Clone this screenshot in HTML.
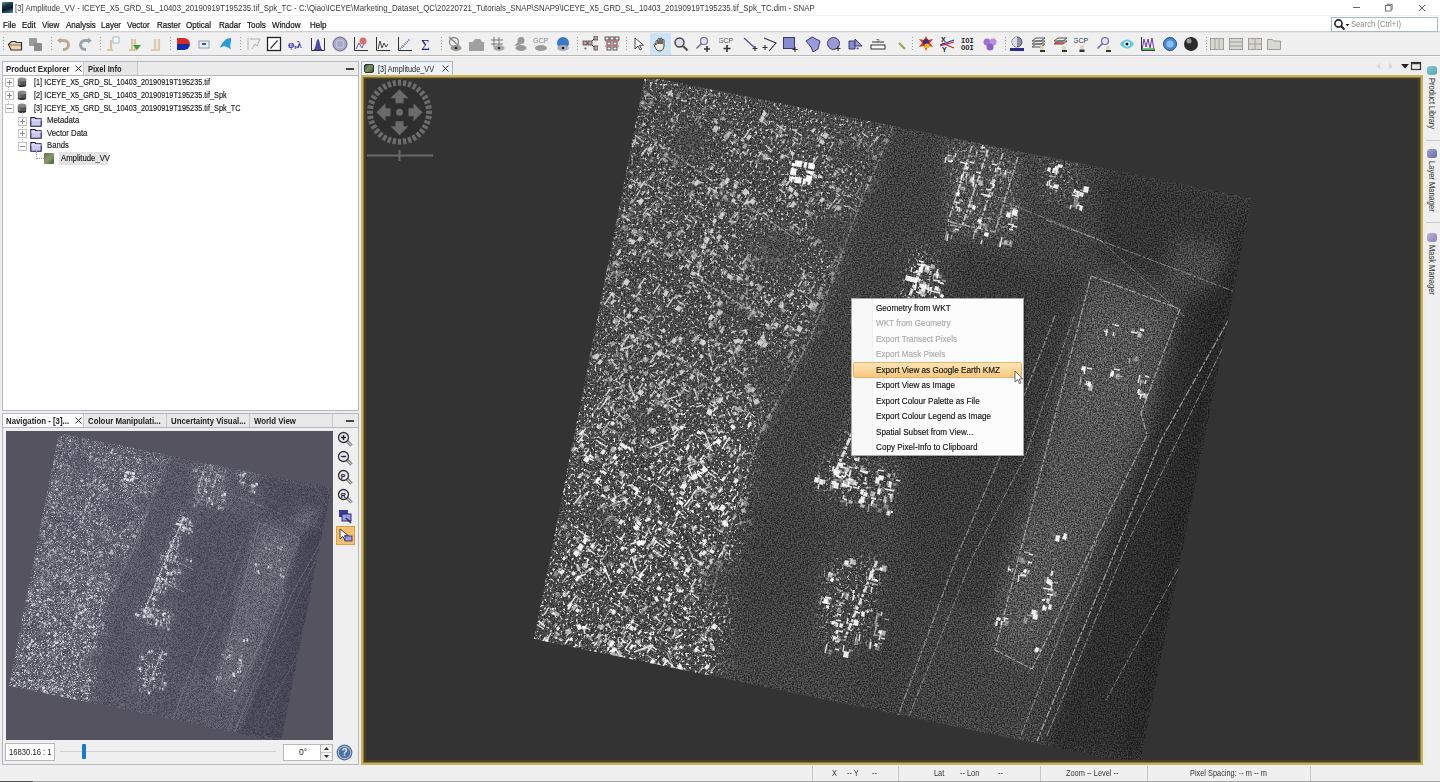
<!DOCTYPE html>
<html><head><meta charset="utf-8">
<style>
*{margin:0;padding:0;box-sizing:border-box}
html,body{width:1440px;height:782px;overflow:hidden;background:#eeeeee;font-family:"Liberation Sans",sans-serif;color:#1e1e1e}
.a{position:absolute}
.t{position:absolute;white-space:nowrap;line-height:1;transform-origin:0 0}
.sx{transform:scaleX(.89)}
.menu .t{font-size:9px;top:20.5px;color:#111;-webkit-text-stroke:.2px #111}
.sep{position:absolute;top:37px;width:1px;height:15px;background:repeating-linear-gradient(#9a9a9a 0 1px,transparent 1px 3px)}
.ic{position:absolute;top:36px;width:16px;height:16px}
.tab{position:absolute;font-weight:bold;font-size:8.4px;color:#222}
.tree .t{font-size:8.5px;color:#262626}
.st{position:absolute;font-size:8.2px;top:770px;color:#333;white-space:nowrap;line-height:1}
.ss{position:absolute;top:766px;width:1px;height:15px;background:#c6c6c6}
</style></head><body>
<div class="a" style="left:0;top:0;width:1440px;height:16px;background:#fff;border-bottom:1px solid #f0f0f0"></div>
<div class="a" style="left:2px;top:2px;width:11px;height:11px;background:linear-gradient(160deg,#6f98a8 0,#1b3b4b 30%,#0a1a24 60%,#4c90b8 100%)"></div>
<div class="t" style="left:15px;top:4px;font-size:8.8px;color:#3a3a3a;transform:scaleX(.889)">[3] Amplitude_VV - ICEYE_X5_GRD_SL_10403_20190919T195235.tif_Spk_TC - C:\Qiao\ICEYE\Marketing_Dataset_QC\20220721_Tutorials_SNAP\SNAP9\ICEYE_X5_GRD_SL_10403_20190919T195235.tif_Spk_TC.dim - SNAP</div>
<svg class="a" style="left:1345px;top:0" width="95" height="16"><path d="M8 7.5h7" stroke="#666" stroke-width="1"/><rect x="40.5" y="5.5" width="5.5" height="5.5" fill="none" stroke="#777" stroke-width="1"/><path d="M42 5.5v-1.2h5.2v5.2h-1.2" fill="none" stroke="#777" stroke-width="1"/><path d="M74 5l6 6M80 5l-6 6" stroke="#555" stroke-width="1"/></svg>
<div class="a" style="left:0;top:16px;width:1440px;height:16px;background:#fff;border-bottom:1px solid #cfcfcf"></div>
<div class="menu">
<span class="t sx" style="left:3px">File</span>
<span class="t sx" style="left:22px">Edit</span>
<span class="t sx" style="left:42px">View</span>
<span class="t sx" style="left:66px">Analysis</span>
<span class="t sx" style="left:101px">Layer</span>
<span class="t sx" style="left:127px">Vector</span>
<span class="t sx" style="left:157px">Raster</span>
<span class="t sx" style="left:186px">Optical</span>
<span class="t sx" style="left:219px">Radar</span>
<span class="t sx" style="left:247px">Tools</span>
<span class="t sx" style="left:272px">Window</span>
<span class="t sx" style="left:310px">Help</span>
</div>
<div class="a" style="left:1331px;top:17px;width:107px;height:15px;background:#fff;border:1px solid #a9b7c9"></div>
<svg class="a" style="left:1333px;top:18px" width="18" height="13"><circle cx="5.5" cy="5.5" r="3.6" fill="none" stroke="#222" stroke-width="1.6"/><path d="M8 8l3.5 3.5" stroke="#222" stroke-width="2"/><path d="M12.5 6h4l-2 2.2z" fill="#222"/></svg>
<div class="t" style="left:1351px;top:19.5px;font-size:8.5px;color:#8a8a8a;transform:scaleX(.9)">Search (Ctrl+I)</div>
<div class="a" style="left:0;top:32px;width:1440px;height:24px;background:#f0f0f0;border-top:1px solid #e6e6e6;border-bottom:1px solid #b8b8b8"></div>
<div class="a" style="left:0;top:56px;width:1440px;height:1px;background:#f8f8f8"></div>
<svg class="a" style="left:7px;top:36px" width="16" height="16"><path d="M1.5 8.5l3-3h4l1 1h5v7.5h-10.5z" fill="#e8d6c0" stroke="#3a3020" stroke-width="1.2"/><path d="M2 9h12" stroke="#8a7050"/></svg>
<svg class="a" style="left:28px;top:36px" width="16" height="16"><rect x="1" y="2" width="8" height="8" rx="1" fill="#9a9a9a"/><rect x="6" y="7" width="8" height="8" rx="1" fill="#8c8c8c"/></svg>
<svg class="a" style="left:56px;top:36px" width="16" height="16"><path d="M3 4.5h5a4.5 4.5 0 0 1 0 9h-1" fill="none" stroke="#b8ac90" stroke-width="3"/><path d="M1 4.5l4-3v6z" fill="#b8ac90"/></svg>
<svg class="a" style="left:77px;top:36px" width="16" height="16"><path d="M13 4.5h-5a4.5 4.5 0 0 0 0 9h1" fill="none" stroke="#98a4b0" stroke-width="3"/><path d="M15 4.5l-4-3v6z" fill="#98a4b0"/></svg>
<svg class="a" style="left:104px;top:36px" width="16" height="16"><path d="M3 14h6M7 14V4" stroke="#d9c3a0" stroke-width="2.2"/><rect x="9" y="1" width="6" height="6" fill="#fff" stroke="#a8b8d8"/></svg>
<svg class="a" style="left:126px;top:36px" width="16" height="16"><path d="M3 14h8M6 14V3M9 14V3" stroke="#d9c3a0" stroke-width="2.2"/><path d="M7 9l4 5 4-5z" fill="#3aa03a"/></svg>
<svg class="a" style="left:148px;top:36px" width="16" height="16"><path d="M3 14h9M7 14V3M11 14V3" stroke="#dccaa8" stroke-width="2.2"/></svg>
<svg class="a" style="left:175px;top:36px" width="16" height="16"><path d="M2 2h7a6 6 0 0 1 6 6H2z" fill="#d42a2a"/><path d="M2 8h13a6 6 0 0 1-6 6H2z" fill="#1a2ab0"/></svg>
<svg class="a" style="left:196px;top:36px" width="16" height="16"><rect x="3" y="5" width="10" height="7" fill="#e8eef6" stroke="#8aa0b8"/><path d="M6 8h4" stroke="#3a5a9a" stroke-width="2"/></svg>
<svg class="a" style="left:218px;top:36px" width="16" height="16"><path d="M2 12c2-6 6-10 11-10 1 4-2 6 0 11-4-1-6-5-11-1z" fill="#2a9ad8"/></svg>
<svg class="a" style="left:246px;top:36px" width="16" height="16"><path d="M2 2v12M4 3h10l-3 7-2-2-3 5" fill="none" stroke="#b0b0b0" stroke-width="1"/></svg>
<svg class="a" style="left:266px;top:36px" width="16" height="16"><rect x="1.5" y="1.5" width="13" height="13" fill="#fff" stroke="#222" stroke-width="1.3"/><path d="M4 12l7-8 1 1-7 8z" fill="#444"/></svg>
<svg class="a" style="left:288px;top:36px" width="16" height="16"><text x="0" y="12" font-size="10" font-weight="bold" fill="#2a2ab0" font-family="Liberation Serif">φ,λ</text></svg>
<svg class="a" style="left:310px;top:36px" width="16" height="16"><path d="M1.5 2v12.5h13V2" fill="none" stroke="#333"/><path d="M3 14c3 0 3-11 5-11s2 11 5 11z" fill="#4a4aa8"/></svg>
<svg class="a" style="left:332px;top:36px" width="16" height="16"><circle cx="8" cy="8" r="7" fill="#a8a8c8" stroke="#6a6a88"/><circle cx="8" cy="8" r="4" fill="none" stroke="#ccd"/></svg>
<svg class="a" style="left:353px;top:36px" width="16" height="16"><path d="M1.5 1v13.5H15" fill="none" stroke="#333"/><path d="M3 13l3-6 3 5 3-7" fill="none" stroke="#6a5aa0"/><circle cx="10" cy="5" r="3.5" fill="#d87070"/></svg>
<svg class="a" style="left:375px;top:36px" width="16" height="16"><path d="M1.5 1v13.5H15" fill="none" stroke="#333"/><path d="M3 13l2-8 2 7 2-5 2 4 2-3" fill="none" stroke="#444"/></svg>
<svg class="a" style="left:397px;top:36px" width="16" height="16"><path d="M1.5 1v13.5H15" fill="none" stroke="#333"/><path d="M3 13l10-10" stroke="#7a6ab8" stroke-width="2" stroke-dasharray="1 1"/></svg>
<svg class="a" style="left:419px;top:36px" width="16" height="16"><text x="2" y="14" font-size="15" fill="#1a1a8a" font-family="Liberation Serif">Σ</text></svg>
<svg class="a" style="left:447px;top:36px" width="16" height="16"><circle cx="7" cy="6" r="4.5" fill="none" stroke="#888" stroke-width="1.3"/><path d="M2 1l11 10" stroke="#888" stroke-width="1.3"/><ellipse cx="9" cy="12" rx="5.5" ry="3" fill="#999"/><circle cx="9" cy="12" r="1.3" fill="#333"/></svg>
<svg class="a" style="left:468px;top:36px" width="16" height="16"><path d="M1 6h4l2-3h5l2 3h2v9H1z" fill="#a0a0a0"/></svg>
<svg class="a" style="left:490px;top:36px" width="16" height="16"><path d="M4 1v10M9 1v10M1 4h12M1 8h12" stroke="#777"/><ellipse cx="9" cy="12" rx="5.5" ry="3" fill="#aaa"/><circle cx="9" cy="12" r="1.3" fill="#333"/></svg>
<svg class="a" style="left:512px;top:36px" width="16" height="16"><circle cx="9" cy="4.5" r="3.5" fill="#999"/><path d="M2 10l4-4 3 3z" fill="#999"/><ellipse cx="9" cy="12" rx="5.5" ry="3" fill="#999"/></svg>
<svg class="a" style="left:533px;top:36px" width="16" height="16"><text x="0" y="7" font-size="7" fill="#888" font-family="Liberation Sans">GCP</text><ellipse cx="8" cy="12" rx="6" ry="3" fill="#9a9a9a"/></svg>
<svg class="a" style="left:555px;top:36px" width="16" height="16"><circle cx="8" cy="7" r="6" fill="#3a78c8"/><ellipse cx="8" cy="12" rx="6" ry="3" fill="#a8b0c0"/><circle cx="8" cy="12" r="1.3" fill="#222"/></svg>
<svg class="a" style="left:582px;top:36px" width="16" height="16"><path d="M3 7h5l5-5M8 7l5 5" stroke="#444" fill="none"/><rect x="1" y="5" width="4" height="4" fill="#c8a0a0" stroke="#333" stroke-width=".7"/><rect x="6" y="5" width="4" height="4" fill="#c8a0a0" stroke="#333" stroke-width=".7"/><rect x="12" y="0" width="4" height="4" fill="#c8a0a0" stroke="#333" stroke-width=".7"/><rect x="12" y="10" width="4" height="4" fill="#c8a0a0" stroke="#333" stroke-width=".7"/><text x="2" y="16" font-size="7" fill="#444">*</text></svg>
<svg class="a" style="left:604px;top:36px" width="16" height="16"><g fill="none" stroke="#333" stroke-width=".8"><rect x="1" y="1" width="4" height="3"/><rect x="6" y="1" width="4" height="3"/><rect x="11" y="1" width="4" height="3"/><rect x="3" y="6" width="4" height="3"/><rect x="9" y="6" width="4" height="3"/><rect x="3" y="11" width="4" height="3"/><rect x="9" y="11" width="4" height="3"/></g><path d="M1 5h14M1 10h14" stroke="#c83030" stroke-width=".8"/></svg>
<svg class="a" style="left:630px;top:36px" width="16" height="16"><path d="M5 2v11l3-3 2 4 1.5-.8-2-4h4z" fill="#fff" stroke="#333" stroke-width=".9"/></svg>
<div class="a" style="left:650px;top:33px;width:21px;height:22px;background:#cde4f7"></div>
<svg class="a" style="left:652px;top:36px" width="16" height="16"><path d="M4 9V5.5a1 1 0 0 1 2 0V8V3.5a1 1 0 0 1 2 0V8V3a1 1 0 0 1 2 0v5V4.5a1 1 0 0 1 2 0V10c0 3-2 5-4.5 5S4 13 3 11L2 8.5a1 1 0 0 1 2 .5z" fill="#f2e8d8" stroke="#333" stroke-width=".9"/></svg>
<svg class="a" style="left:673px;top:36px" width="16" height="16"><circle cx="6.5" cy="6.5" r="4.5" fill="#dcdcf0" stroke="#444" stroke-width="1.4"/><path d="M10 10l4.5 4.5" stroke="#555" stroke-width="2.4"/></svg>
<svg class="a" style="left:695px;top:36px" width="16" height="16"><circle cx="9" cy="5" r="3.5" fill="#e8e4f8" stroke="#6a6ab0" stroke-width="1.2"/><path d="M6.5 7.5L1.5 12.5" stroke="#6a6ab0" stroke-width="1.6"/><path d="M12 10v6M9 13h6" stroke="#333" stroke-width="1.5"/></svg>
<svg class="a" style="left:719px;top:36px" width="16" height="16"><text x="-1" y="7" font-size="7" fill="#555" font-family="Liberation Sans">GCP</text><path d="M8 9v7M4.5 12.5h7" stroke="#333" stroke-width="1.6"/></svg>
<svg class="a" style="left:743px;top:36px" width="16" height="16"><path d="M1 2l11 10" stroke="#4a4aa0" stroke-width="1.2"/><path d="M12 10v5M9.5 12.5h5" stroke="#333" stroke-width="1.1"/></svg>
<svg class="a" style="left:761px;top:36px" width="16" height="16"><path d="M3 2l12 5-7 8" fill="none" stroke="#333" stroke-width="1.1"/><path d="M4 9v5M1.5 11.5h5" stroke="#333" stroke-width="1.1"/></svg>
<svg class="a" style="left:782px;top:36px" width="16" height="16"><rect x="1.5" y="1.5" width="11" height="11" fill="#8a8ad0" stroke="#3a3a7a"/><path d="M13 11v5M10.5 13.5h5" stroke="#333" stroke-width="1.1"/></svg>
<svg class="a" style="left:805px;top:36px" width="16" height="16"><path d="M1 5l6-4 8 4-2 8-5 3-2-5z" fill="#9a9ad8" stroke="#3a3a7a"/></svg>
<svg class="a" style="left:826px;top:36px" width="16" height="16"><circle cx="7.5" cy="7.5" r="6" fill="#9a9ad8" stroke="#3a3a7a"/><path d="M12 10v5M9.5 12.5h5" stroke="#333" stroke-width="1.1"/></svg>
<svg class="a" style="left:848px;top:36px" width="16" height="16"><path d="M1 5h6v8H1z" fill="#8a8ad0" stroke="#3a3a7a"/><path d="M7 3l7 7H7z" fill="#9a9ad8" stroke="#3a3a7a"/><text x="8" y="16" font-size="8" fill="#444">*</text></svg>
<svg class="a" style="left:870px;top:36px" width="16" height="16"><rect x="1" y="9" width="14" height="4" fill="#fff" stroke="#333"/><path d="M2 6h12" stroke="#333"/><text x="6" y="7" font-size="6" fill="#333">?</text></svg>
<svg class="a" style="left:894px;top:36px" width="16" height="16"><path d="M5 7l6 6" stroke="#9aa860" stroke-width="2.4"/></svg>
<svg class="a" style="left:918px;top:36px" width="16" height="16"><path d="M8 0l2 4 5-1-3 4 3 4-5-1-2 5-2-5-5 1 3-4-3-4 5 1z" fill="#e23818"/><circle cx="8" cy="6" r="3" fill="#3a2a8a"/><circle cx="9" cy="10" r="2.5" fill="#f0c020"/></svg>
<svg class="a" style="left:939px;top:36px" width="16" height="16"><text x="2" y="6" font-size="7" font-weight="bold" fill="#222">X</text><text x="3" y="16" font-size="7" font-weight="bold" fill="#222">Y</text><path d="M1 10l14-4M3 7l12 5" stroke="#c82828" stroke-width="1.2"/><path d="M1 9l14-5" stroke="#2a2a9a" stroke-width="1.2"/></svg>
<svg class="a" style="left:960px;top:36px" width="16" height="16"><text x="1" y="7" font-size="7" font-weight="bold" fill="#222" font-family="Liberation Mono">IOI</text><text x="1" y="14" font-size="7" font-weight="bold" fill="#222" font-family="Liberation Mono">OOI</text></svg>
<svg class="a" style="left:982px;top:36px" width="16" height="16"><circle cx="5" cy="6" r="3.5" fill="#a070d0"/><circle cx="11" cy="6" r="3.5" fill="#b890e0"/><circle cx="8" cy="11" r="3.5" fill="#9060c8"/></svg>
<svg class="a" style="left:1009px;top:36px" width="16" height="16"><circle cx="8" cy="6" r="5" fill="#9090b0" stroke="#333" stroke-width=".8"/><path d="M8 1a5 5 0 0 0 0 10z" fill="#dcdcec"/><rect x="1" y="12" width="14" height="3" fill="#2a2a8a"/></svg>
<svg class="a" style="left:1030px;top:36px" width="16" height="16"><path d="M2 5l4-3h9l-4 3zM2 8l4-3h9l-4 3zM2 11l4-3h9l-4 3z" fill="none" stroke="#555"/><circle cx="12" cy="12" r="2" fill="#e8d0b0"/><rect x="10" y="14" width="5" height="2" fill="#333"/></svg>
<svg class="a" style="left:1052px;top:36px" width="16" height="16"><path d="M2 5l4-3h9l-4 3zM2 8l4-3h9l-4 3z" fill="none" stroke="#555"/><path d="M3 7h9" stroke="#d03030" stroke-width="1.5"/><circle cx="12" cy="12" r="2" fill="#e8d0b0"/><rect x="10" y="14" width="5" height="2" fill="#333"/></svg>
<svg class="a" style="left:1074px;top:36px" width="16" height="16"><text x="-1" y="7" font-size="7" fill="#333" font-family="Liberation Sans">GCP</text><circle cx="8" cy="11" r="2" fill="#e8d0b0"/><rect x="5.5" y="13.5" width="5" height="2.5" fill="#333"/></svg>
<svg class="a" style="left:1096px;top:36px" width="16" height="16"><circle cx="9" cy="5" r="3.5" fill="#e8e4f8" stroke="#6a6ab0" stroke-width="1.2"/><path d="M6.5 7.5L1.5 12.5" stroke="#6a6ab0" stroke-width="1.6"/><circle cx="12" cy="12" r="2" fill="#e8d0b0"/><rect x="10" y="14" width="5" height="2" fill="#333"/></svg>
<svg class="a" style="left:1119px;top:36px" width="16" height="16"><path d="M1 8c4-6 10-6 14 0-4 6-10 6-14 0z" fill="#5ac8e8"/><circle cx="8" cy="8" r="2.8" fill="#fff"/><circle cx="8" cy="8" r="1.5" fill="#111"/></svg>
<svg class="a" style="left:1140px;top:36px" width="16" height="16"><path d="M1.5 1v13.5H15" fill="none" stroke="#333"/><path d="M2 14l2-11 2 8 2-8 2 9 2-10 2 12z" fill="none" stroke="#6a3aa0"/><path d="M2 13h13" stroke="#3ac040" stroke-width="1.5"/></svg>
<svg class="a" style="left:1162px;top:36px" width="16" height="16"><circle cx="8" cy="8" r="6.5" fill="#4a8ad8" stroke="#2a4a8a"/><circle cx="8" cy="8" r="3.5" fill="#8ac0f0"/></svg>
<svg class="a" style="left:1183px;top:36px" width="16" height="16"><circle cx="8" cy="8" r="7" fill="#2a2a2a"/><circle cx="6" cy="5" r="2.5" fill="#9a9a9a"/></svg>
<svg class="a" style="left:1209px;top:36px" width="16" height="16"><rect x="1.5" y="2.5" width="13" height="11" fill="#d8d8d0" stroke="#a0a098"/><path d="M6 3v10M10 3v10" stroke="#a0a098"/></svg>
<svg class="a" style="left:1228px;top:36px" width="16" height="16"><rect x="1.5" y="2.5" width="13" height="11" fill="#d8d8d0" stroke="#a0a098"/><path d="M2 6h12M2 10h12" stroke="#a0a098"/></svg>
<svg class="a" style="left:1247px;top:36px" width="16" height="16"><rect x="1.5" y="2.5" width="13" height="11" fill="#d8d8d0" stroke="#a0a098"/><path d="M8 3v10M2 8h12" stroke="#a0a098"/></svg>
<svg class="a" style="left:1266px;top:36px" width="16" height="16"><path d="M1.5 3.5h5l1 1.5h7v8.5h-13z" fill="#d8d8d0" stroke="#a0a098"/></svg>
<div class="sep" style="left:3px"></div>
<div class="sep" style="left:51px"></div>
<div class="sep" style="left:100px"></div>
<div class="sep" style="left:170px"></div>
<div class="sep" style="left:240px"></div>
<div class="sep" style="left:441px"></div>
<div class="sep" style="left:577px"></div>
<div class="sep" style="left:626px"></div>
<div class="sep" style="left:912px"></div>
<div class="sep" style="left:1005px"></div>
<div class="sep" style="left:1206px"></div>
<div class="a" style="left:2px;top:61px;width:357px;height:350px;background:#fff;border:1px solid #b4b8c0"></div>
<div class="a" style="left:2px;top:61px;width:357px;height:15px;background:#ececec;border:1px solid #b4b8c0"></div>
<div class="a" style="left:3px;top:62px;width:81px;height:13px;background:#fbfbfb;border-right:1px solid #c8c8c8"></div>
<div class="a" style="left:84px;top:62px;width:54px;height:13px;background:#e6e6e6;border-right:1px solid #c8c8c8"></div>
<div class="t tab" style="left:6px;top:65px;transform:scaleX(.935)">Product Explorer</div>
<svg class="a" style="left:74px;top:64px" width="9" height="9"><path d="M1.5 1.5l6 6M7.5 1.5l-6 6" stroke="#333" stroke-width="1"/></svg>
<div class="t tab" style="left:88px;top:65px;transform:scaleX(.9)">Pixel Info</div>
<div class="a" style="left:346px;top:68px;width:8px;height:2px;background:#444"></div>
<div class="a" style="left:8px;top:86px;width:0;height:20px;border-left:1px dotted #b0b0b0"></div>
<svg class="a" style="left:5px;top:78px" width="9" height="9"><rect x=".5" y=".5" width="8" height="8" fill="#fff" stroke="#c4c4c4"/><path d="M2 4.5h5" stroke="#8a8a8a"/><path d="M4.5 2v5" stroke="#8a8a8a"/></svg>
<svg class="a" style="left:17px;top:77px" width="10" height="11"><ellipse cx="5" cy="8" rx="4.2" ry="2" fill="#333"/><rect x=".8" y="2.5" width="8.4" height="5.5" fill="#555"/><ellipse cx="5" cy="2.5" rx="4.2" ry="2" fill="#888"/><rect x="1.5" y="3" width="2" height="5" fill="#777"/></svg>
<div class="t" style="left:34px;top:77.5px;font-size:8.5px;color:#1a1a1a;-webkit-text-stroke:.15px #1a1a1a;transform:scaleX(.86)">[1] ICEYE_X5_GRD_SL_10403_20190919T195235.tif</div>
<svg class="a" style="left:5px;top:91px" width="9" height="9"><rect x=".5" y=".5" width="8" height="8" fill="#fff" stroke="#c4c4c4"/><path d="M2 4.5h5" stroke="#8a8a8a"/><path d="M4.5 2v5" stroke="#8a8a8a"/></svg>
<svg class="a" style="left:17px;top:90px" width="10" height="11"><ellipse cx="5" cy="8" rx="4.2" ry="2" fill="#333"/><rect x=".8" y="2.5" width="8.4" height="5.5" fill="#555"/><ellipse cx="5" cy="2.5" rx="4.2" ry="2" fill="#888"/><rect x="1.5" y="3" width="2" height="5" fill="#777"/></svg>
<div class="t" style="left:34px;top:90.5px;font-size:8.5px;color:#1a1a1a;-webkit-text-stroke:.15px #1a1a1a;transform:scaleX(.86)">[2] ICEYE_X5_GRD_SL_10403_20190919T195235.tif_Spk</div>
<svg class="a" style="left:5px;top:104px" width="9" height="9"><rect x=".5" y=".5" width="8" height="8" fill="#fff" stroke="#c4c4c4"/><path d="M2 4.5h5" stroke="#8a8a8a"/></svg>
<svg class="a" style="left:17px;top:103px" width="10" height="11"><ellipse cx="5" cy="8" rx="4.2" ry="2" fill="#333"/><rect x=".8" y="2.5" width="8.4" height="5.5" fill="#555"/><ellipse cx="5" cy="2.5" rx="4.2" ry="2" fill="#888"/><rect x="1.5" y="3" width="2" height="5" fill="#777"/></svg>
<div class="t" style="left:34px;top:103.5px;font-size:8.5px;color:#1a1a1a;-webkit-text-stroke:.15px #1a1a1a;transform:scaleX(.86)">[3] ICEYE_X5_GRD_SL_10403_20190919T195235.tif_Spk_TC</div>
<div class="a" style="left:22px;top:112px;width:0;height:34px;border-left:1px dotted #b0b0b0"></div>
<svg class="a" style="left:18px;top:116.5px" width="9" height="9"><rect x=".5" y=".5" width="8" height="8" fill="#fff" stroke="#c4c4c4"/><path d="M2 4.5h5" stroke="#8a8a8a"/><path d="M4.5 2v5" stroke="#8a8a8a"/></svg>
<svg class="a" style="left:30px;top:115.5px" width="12" height="11"><path d="M.8 1.5h4l1 1.2h5.4v7.5H.8z" fill="#c8c8f0" stroke="#1a1a4a" stroke-width="1.1"/><path d="M1 4h10.5" stroke="#eef"/></svg>
<div class="t" style="left:47px;top:116.0px;font-size:8.5px;color:#1a1a1a;-webkit-text-stroke:.15px #1a1a1a;transform:scaleX(.91)">Metadata</div>
<svg class="a" style="left:18px;top:129px" width="9" height="9"><rect x=".5" y=".5" width="8" height="8" fill="#fff" stroke="#c4c4c4"/><path d="M2 4.5h5" stroke="#8a8a8a"/><path d="M4.5 2v5" stroke="#8a8a8a"/></svg>
<svg class="a" style="left:30px;top:128px" width="12" height="11"><path d="M.8 1.5h4l1 1.2h5.4v7.5H.8z" fill="#c8c8f0" stroke="#1a1a4a" stroke-width="1.1"/><path d="M1 4h10.5" stroke="#eef"/></svg>
<div class="t" style="left:47px;top:128.5px;font-size:8.5px;color:#1a1a1a;-webkit-text-stroke:.15px #1a1a1a;transform:scaleX(.91)">Vector Data</div>
<svg class="a" style="left:18px;top:141.5px" width="9" height="9"><rect x=".5" y=".5" width="8" height="8" fill="#fff" stroke="#c4c4c4"/><path d="M2 4.5h5" stroke="#8a8a8a"/></svg>
<svg class="a" style="left:30px;top:140.5px" width="12" height="11"><path d="M.8 1.5h4l1 1.2h5.4v7.5H.8z" fill="#c8c8f0" stroke="#1a1a4a" stroke-width="1.1"/><path d="M1 4h10.5" stroke="#eef"/></svg>
<div class="t" style="left:47px;top:141.0px;font-size:8.5px;color:#1a1a1a;-webkit-text-stroke:.15px #1a1a1a;transform:scaleX(.91)">Bands</div>
<div class="a" style="left:36px;top:151px;width:0;height:8px;border-left:1px dotted #999"></div>
<div class="a" style="left:36px;top:158px;width:8px;height:0;border-top:1px dotted #999"></div>
<div class="a" style="left:44px;top:153px;width:10px;height:11px;background:linear-gradient(135deg,#5a6a4a,#8a9a6a 50%,#4a5a3a);border-radius:1px"></div>
<div class="a" style="left:59px;top:152px;width:49px;height:13px;background:#e4e4e4"></div>
<div class="t" style="left:60.5px;top:154px;font-size:8.5px;color:#1a1a1a;-webkit-text-stroke:.15px #1a1a1a;transform:scaleX(.91)">Amplitude_VV</div>
<div class="a" style="left:2px;top:413px;width:357px;height:352px;background:#efefef;border:1px solid #b4b8c0"></div>
<div class="a" style="left:2px;top:413px;width:357px;height:15px;background:#ebebeb;border:1px solid #b4b8c0"></div>
<div class="a" style="left:3px;top:414px;width:81px;height:13px;background:#fbfbfb;border-right:1px solid #c8c8c8"></div>
<div class="a" style="left:84px;top:414px;width:83px;height:13px;background:#e8e8e8;border-right:1px solid #c8c8c8"></div>
<div class="a" style="left:167px;top:414px;width:83px;height:13px;background:#e8e8e8;border-right:1px solid #c8c8c8"></div>
<div class="a" style="left:250px;top:414px;width:83px;height:13px;background:#e8e8e8;border-right:1px solid #c8c8c8"></div>
<div class="t tab" style="left:6px;top:417px;transform:scaleX(.935)">Navigation - [3]...</div>
<svg class="a" style="left:74px;top:416px" width="9" height="9"><path d="M1.5 1.5l6 6M7.5 1.5l-6 6" stroke="#333" stroke-width="1"/></svg>
<div class="t tab" style="left:88px;top:417px;transform:scaleX(.935)">Colour Manipulati...</div>
<div class="t tab" style="left:171px;top:417px;transform:scaleX(.935)">Uncertainty Visual...</div>
<div class="t tab" style="left:254px;top:417px;transform:scaleX(.935)">World View</div>
<div class="a" style="left:346px;top:420px;width:8px;height:2px;background:#444"></div>
<div class="a" style="left:6px;top:431px;width:327px;height:309px;background:#54535f;overflow:hidden" id="navimg"><svg width="327" height="309"><defs><filter id="navpal" color-interpolation-filters="sRGB" x="-5%" y="-5%" width="110%" height="110%"><feColorMatrix type="matrix" values="0.75 0 0 0 0.15  0.75 0 0 0 0.15  0.7 0 0 0 0.22  0 0 0 1 0"/></filter></defs><use href="#sarg" transform="translate(52.6,2.2) scale(0.449) translate(-644.6,-76.3)" filter="url(#navpal)"/></svg></div>
<svg class="a" style="left:337px;top:431px" width="16" height="16"><path d="M9.5 9.5l5 5" stroke="#666" stroke-width="3"/><path d="M9.5 9.5l5 5" stroke="#ccc" stroke-width="1.2"/><circle cx="6.5" cy="6.5" r="5" fill="#e8e8f0" stroke="#333" stroke-width="1.3"/><path d="M4 6.5h5M6.5 4v5" stroke="#222" stroke-width="1.4"/></svg>
<svg class="a" style="left:337px;top:450px" width="16" height="16"><path d="M9.5 9.5l5 5" stroke="#666" stroke-width="3"/><path d="M9.5 9.5l5 5" stroke="#ccc" stroke-width="1.2"/><circle cx="6.5" cy="6.5" r="5" fill="#e8e8f0" stroke="#333" stroke-width="1.3"/><path d="M4 6.5h5" stroke="#222" stroke-width="1.4"/></svg>
<svg class="a" style="left:337px;top:469px" width="16" height="16"><path d="M9.5 9.5l5 5" stroke="#666" stroke-width="3"/><path d="M9.5 9.5l5 5" stroke="#ccc" stroke-width="1.2"/><circle cx="6.5" cy="6.5" r="5" fill="#e8e8f0" stroke="#333" stroke-width="1.3"/><text x="3.8" y="9.5" font-size="7" font-weight="bold" fill="#222">P</text></svg>
<svg class="a" style="left:337px;top:488px" width="16" height="16"><path d="M9.5 9.5l5 5" stroke="#666" stroke-width="3"/><path d="M9.5 9.5l5 5" stroke="#ccc" stroke-width="1.2"/><circle cx="6.5" cy="6.5" r="5" fill="#e8e8f0" stroke="#333" stroke-width="1.3"/><text x="3.8" y="9.5" font-size="7" font-weight="bold" fill="#222">R</text></svg>
<svg class="a" style="left:337px;top:508px" width="16" height="16"><rect x="2" y="2" width="9" height="7" fill="#3a3aa0"/><rect x="5" y="6" width="9" height="7" fill="#9a9ae0" stroke="#2a2a7a"/><path d="M9 10l5 5" stroke="#333" stroke-width="1.5"/></svg>
<div class="a" style="left:336px;top:526px;width:19px;height:19px;background:#f5c070;border:1px solid #e0a040"></div>
<svg class="a" style="left:337px;top:527px" width="17" height="17"><path d="M3 2v10l3-2.5 2 4 1.5-.8-2-4h4z" fill="#fff" stroke="#333" stroke-width=".9"/><rect x="8" y="9" width="7" height="5" fill="#9a9ae0" stroke="#2a2a7a" stroke-width=".8"/></svg>
<div class="a" style="left:5px;top:743px;width:50px;height:18px;background:#fff;border:1px solid #b8b8b8"></div>
<div class="t" style="left:8.5px;top:748px;font-size:8.5px;color:#222;transform:scaleX(.9)">16830.16 : 1</div>
<div class="a" style="left:60px;top:751px;width:216px;height:1px;background:#d0d0d0"></div>
<div class="a" style="left:82px;top:744px;width:4px;height:15px;background:#1a78c8;border-radius:1px"></div>
<div class="a" style="left:283px;top:744px;width:38px;height:17px;background:#fff;border:1px solid #b8b8b8"></div>
<div class="t" style="left:299px;top:748px;font-size:8.5px;color:#222">0°</div>
<div class="a" style="left:320px;top:744px;width:13px;height:17px;background:#f4f4f4;border:1px solid #b8b8b8"></div>
<svg class="a" style="left:321px;top:745px" width="11" height="15"><path d="M3 5l2.5-3 2.5 3zM3 10l2.5 3 2.5-3z" fill="#333"/><path d="M0 7.5h11" stroke="#ccc"/></svg>
<svg class="a" style="left:336px;top:744px" width="17" height="17"><circle cx="8.5" cy="8.5" r="7.3" fill="#a8bcd8" stroke="#56709a" stroke-width="1.2"/><circle cx="8.5" cy="8.5" r="5.6" fill="#4e6e9e"/><text x="5.4" y="12.2" font-size="10" font-weight="bold" fill="#dde8f6">?</text></svg>
<div class="a" style="left:0;top:781px;width:1440px;height:1px;background:#a6a6a6"></div>
<div class="a" style="left:0;top:781px;width:33px;height:1px;background:#555"></div>
<div class="a" style="left:361px;top:61px;width:92px;height:15px;background:#edf3f9;border:1px solid #a9b6c8;border-bottom:none"></div>
<div class="a" style="left:364px;top:63.5px;width:10px;height:9.5px;border-radius:2px;background:linear-gradient(135deg,#3a4a6a 0,#7a9a5a 45%,#5a7040 80%,#2a3a2a);border:1px solid #333"></div>
<div class="t" style="left:378px;top:64.5px;font-size:8.6px;color:#222;transform:scaleX(.85)">[3] Amplitude_VV</div>
<svg class="a" style="left:441px;top:64px" width="9" height="9"><path d="M1.5 1.5l6 6M7.5 1.5l-6 6" stroke="#333" stroke-width="1"/></svg>
<svg class="a" style="left:1372px;top:60px" width="50" height="12"><path d="M8 2.5L4.5 6 8 9.5z" fill="#d6d6d6"/><path d="M17 2.5L20.5 6 17 9.5z" fill="#d6d6d6"/><path d="M29 4h8l-4 4.5z" fill="#222"/><rect x="39.5" y="2.5" width="9" height="7" fill="none" stroke="#333" stroke-width="1.2"/><path d="M39.5 3.5h9" stroke="#333" stroke-width="1.5"/></svg>
<div class="a" style="left:361px;top:75px;width:1062px;height:690px;background:#bfa85a;box-shadow:inset 0 0 0 2px #c9b35f, inset 0 0 0 3px #8a7538, inset 0 0 0 5px #4a4024"></div>
<div class="a" id="vw" style="left:366px;top:79px;width:1052px;height:681px;background:#333333;overflow:hidden">
<svg class="a" style="left:-366px;top:-79px" width="1440" height="782">
<defs><clipPath id="cp"><polygon points="645,76 1252,198 1140,765 534,639"/></clipPath>
<filter id="tex" filterUnits="userSpaceOnUse" x="520" y="60" width="760" height="720" color-interpolation-filters="sRGB"><feGaussianBlur in="SourceGraphic" stdDeviation="9" result="m"/><feTurbulence type="fractalNoise" baseFrequency="0.7" numOctaves="2" seed="3" result="n"/><feColorMatrix in="n" type="matrix" values="2.4 0 0 0 -0.7  2.4 0 0 0 -0.7  2.4 0 0 0 -0.7  0 0 0 0 1" result="t"/><feComposite in="m" in2="t" operator="arithmetic" k1="0.9" k2="0.55" k3="0" k4="0"/></filter>
<filter id="blob" filterUnits="userSpaceOnUse" x="520" y="60" width="760" height="720" color-interpolation-filters="sRGB"><feTurbulence type="fractalNoise" baseFrequency="0.38" numOctaves="2" seed="9" result="n"/><feColorMatrix in="n" type="matrix" values="0 0 0 0 1  0 0 0 0 1  0 0 0 0 1  5 0 0 0 -2.85" result="w"/><feComposite in="w" in2="SourceGraphic" operator="in"/></filter>
<filter id="bl" filterUnits="userSpaceOnUse" x="500" y="40" width="800" height="760"><feGaussianBlur stdDeviation="8"/></filter>
<pattern id="pa" width="53" height="47" patternUnits="userSpaceOnUse" patternTransform="rotate(35)"><path fill="#fff" fill-opacity="0.35" d="M22.9 35.8h2.2v3.9h-2.2zM31.3 4.8h1.3v3.7h-1.3zM49.8 17.9h2.2v1.3h-2.2zM50.5 43.5h3.3v4.7h-3.3zM30.6 30.4h1.7v1.2h-1.7zM4.4 0.8h2.9v2.1h-2.9zM42.3 8.7h1.6v2.2h-1.6zM34.8 30.5h2.8v3.1h-2.8z"/><path fill="#fff" fill-opacity="0.6" d="M25.0 17.8h2.3v4.6h-2.3zM26.9 42.8h1.9v4.9h-1.9zM4.6 31.2h1.6v4.4h-1.6z"/><path fill="#fff" fill-opacity="0.9" d="M26.0 1.4h2.8v4.9h-2.8zM28.6 40.4h2.4v4.8h-2.4zM25.7 16.8h2.4v3.6h-2.4zM1.3 18.2h1.6v1.6h-1.6z"/><path stroke="#fff" stroke-width="1.3" stroke-opacity="0.5" d="M41.5 38.6v8.9M17.6 28.2v8.1M45.6 37.5h9.5M27.0 9.8h9.5M28.9 10.4v9.4M3.1 14.0h10.0"/><path stroke="#fff" stroke-width="1.3" stroke-opacity="0.85" d="M7.1 39.8h5.0M40.5 44.1v5.8M9.9 46.6h4.0M44.8 23.7h3.3M22.0 8.1v8.6M18.7 42.8v7.9M22.6 2.6h7.6M21.1 1.7v6.6M27.8 1.4v9.4"/></pattern>
<pattern id="pb" width="41" height="59" patternUnits="userSpaceOnUse" patternTransform="rotate(-18)"><path fill="#fff" fill-opacity="0.35" d="M38.2 53.6h3.2v1.8h-3.2zM2.3 21.3h1.3v1.6h-1.3zM1.0 43.0h1.8v4.3h-1.8zM30.1 30.9h2.6v4.2h-2.6zM6.2 2.1h2.6v4.0h-2.6zM11.7 28.8h2.5v3.5h-2.5z"/><path fill="#fff" fill-opacity="0.6" d="M6.5 25.4h2.9v5.0h-2.9zM22.3 26.2h1.3v1.3h-1.3z"/><path fill="#fff" fill-opacity="0.9" d="M39.2 55.9h1.4v4.4h-1.4zM33.2 50.4h1.7v1.3h-1.7zM9.7 1.4h1.5v3.1h-1.5zM20.0 13.1h2.8v1.8h-2.8zM11.0 53.8h3.4v3.9h-3.4z"/><path stroke="#fff" stroke-width="1.3" stroke-opacity="0.5" d="M21.0 55.1v3.6M10.0 12.4v6.4M37.0 44.6h8.6M3.8 40.6v3.2"/><path stroke="#fff" stroke-width="1.3" stroke-opacity="0.85" d="M27.7 10.7v9.4M32.4 20.9h10.7M29.3 27.2v6.9M27.1 26.8v5.8M23.0 29.9v6.3M37.2 11.3v3.5M24.3 40.3h9.0"/></pattern>
<mask id="mu" maskUnits="userSpaceOnUse" x="500" y="40" width="800" height="760"><g filter="url(#bl)">
<polygon points="630,60 893,110 879,160 863,196 810,340 760,433 722,556 700,690 520,690 520,60" fill="#fff" fill-opacity="0.8"/>
<polygon points="540,380 760,420 720,690 520,690" fill="#fff" fill-opacity="1.0"/>
<polygon points="946,138 1019,150 1019,236 946,236" fill="#fff" fill-opacity="0.55"/>
<polygon points="1040,150 1080,158 1080,205 1040,200" fill="#fff" fill-opacity="0.6"/>
<polygon points="905,240 936,246 936,296 905,290" fill="#fff" fill-opacity="0.6"/>
<polygon points="826,556 884,556 872,645 814,645" fill="#fff" fill-opacity="0.7"/>
<polygon points="815,455 900,460 895,505 815,500" fill="#fff" fill-opacity="0.6"/>
<polygon points="1080,300 1160,320 1120,430 1060,420" fill="#fff" fill-opacity="0.25"/>
<polygon points="1010,520 1070,520 1040,640 990,630" fill="#fff" fill-opacity="0.25"/>
<polygon points="915,255 935,262 850,480 828,472" fill="#fff" fill-opacity="0.9"/>
<polygon points="870,330 930,345 915,420 860,405" fill="#fff" fill-opacity="0.5"/>
<circle cx="690" cy="140" r="24" fill="#000" fill-opacity=".8"/>
<circle cx="775" cy="250" r="26" fill="#000" fill-opacity=".8"/>
<circle cx="640" cy="420" r="16" fill="#000" fill-opacity=".8"/>
<circle cx="720" cy="580" r="22" fill="#000" fill-opacity=".8"/>
<circle cx="600" cy="520" r="14" fill="#000" fill-opacity=".8"/>
<circle cx="830" cy="230" r="24" fill="#000" fill-opacity=".8"/>
<circle cx="770" cy="375" r="22" fill="#000" fill-opacity=".8"/>
<circle cx="790" cy="520" r="25" fill="#000" fill-opacity=".8"/>
<circle cx="850" cy="150" r="18" fill="#000" fill-opacity=".8"/>
<circle cx="735" cy="300" r="16" fill="#000" fill-opacity=".8"/>
</g></mask></defs>
<g id="sarg" clip-path="url(#cp)">
<g filter="url(#tex)">
<polygon points="520,60 1280,60 1280,780 520,780" fill="#424242"/>
<polygon points="630,60 893,110 879,160 863,196 810,340 760,433 722,556 700,690 520,690 520,60" fill="#464646"/>
<polygon points="896,120 972,136 945,236 913,340 850,440 810,520 795,640 735,640 758,520 795,440 860,330" fill="#404040"/>
<polygon points="946,138 1019,150 1019,236 946,236" fill="#4b4b4b"/>
<polygon points="1100,165 1260,198 1246,300 1100,260" fill="#343434"/>
<polygon points="960,250 1091,276 1020,520 985,610 905,600 905,460" fill="#3a3a3a"/>
<polygon points="1091,276 1180,309 1147,435 1032,669 990,650" fill="#525252"/>
<polygon points="1180,309 1260,200 1141,760 1040,760 1147,435" fill="#2e2e2e"/>
<polygon points="1175,235 1235,250 1228,295 1165,285" fill="#484848"/>
<polygon points="1205,300 1260,200 1150,765 1120,765" fill="#282828"/>
<polygon points="866,556 925,556 905,764 846,764" fill="#3e3e3e"/>
<polygon points="742,506 821,506 812,608 740,608" fill="#3e3e3e"/>
</g>
<g mask="url(#mu)"><rect x="520" y="60" width="760" height="720" fill="#fff" filter="url(#blob)"/><path fill="#fff" fill-opacity="0.35" d="M645 90l2 2 -2 2 -2 -2zM651 100l3 2 -3 4 -3 -2zM678 92l3 2 -2 4 -3 -2zM668 97l4 3 -1 2 -4 -3zM663 94l4 3 -1 2 -4 -3zM651 148l2 2 -3 5 -2 -2zM652 157l2 1 -3 5 -2 -1zM710 92l4 3 -2 2 -4 -3zM675 159l4 3 -3 4 -4 -3zM645 181l3 2 -2 2 -3 -2zM647 190l3 2 -2 3 -3 -2zM632 207l2 2 -2 3 -2 -2zM641 199l3 2 -3 4 -3 -2zM634 204l2 1 -2 2 -2 -1zM629 212l3 2 -3 4 -3 -2zM626 225l3 2 -3 5 -3 -2zM624 224l2 2 -3 4 -2 -2zM722 116l4 3 -2 2 -4 -3zM715 119l4 3 -2 3 -4 -3zM667 195l3 2 -1 2 -3 -2zM658 202l3 2 -3 5 -3 -2zM649 217l4 3 -2 3 -4 -3zM640 229l3 2 -2 3 -3 -2zM631 239l4 3 -2 2 -4 -3zM620 263l2 1 -3 4 -2 -1zM617 269l4 3 -3 4 -4 -3zM619 270l4 3 -3 4 -4 -3zM608 266l3 2 -2 3 -3 -2zM735 138l3 2 -3 5 -3 -2zM727 130l4 3 -1 2 -4 -3zM709 165l4 3 -1 2 -4 -3zM657 240l2 2 -2 2 -2 -2zM648 248l4 3 -2 4 -4 -3zM754 126l2 1 -2 3 -2 -1zM738 148l3 2 -3 4 -3 -2zM721 190l3 2 -2 3 -3 -2zM715 192l4 3 -3 4 -4 -3zM680 226l4 3 -1 2 -4 -3zM673 250l3 2 -2 3 -3 -2zM625 308l2 2 -3 4 -2 -2zM627 313l3 2 -1 2 -3 -2zM616 326l3 2 -2 3 -3 -2zM603 354l3 2 -2 3 -3 -2zM782 134l2 1 -2 3 -2 -1zM762 140l2 1 -2 3 -2 -1zM771 136l3 2 -2 3 -3 -2zM757 159l3 2 -2 3 -3 -2zM735 181l4 2 -2 3 -4 -2zM734 190l3 2 -3 4 -3 -2zM706 236l2 2 -3 5 -2 -2zM702 244l4 3 -1 2 -4 -3zM659 306l4 3 -2 3 -4 -3zM654 309l3 2 -1 2 -3 -2zM650 314l4 3 -2 3 -4 -3zM625 335l3 2 -3 5 -3 -2zM640 333l4 3 -3 5 -4 -3zM633 339l2 2 -2 2 -2 -2zM617 351l2 2 -3 5 -2 -2zM611 377l2 2 -3 4 -2 -2zM793 138l2 2 -1 2 -2 -2zM785 147l3 2 -2 2 -3 -2zM781 157l2 1 -2 3 -2 -1zM738 215l2 2 -3 5 -2 -2zM718 254l2 1 -2 3 -2 -1zM697 263l2 2 -2 3 -2 -2zM699 262l4 3 -3 5 -4 -3zM683 300l2 2 -3 4 -2 -2zM682 306l2 1 -1 2 -2 -1zM648 343l3 2 -2 3 -3 -2zM634 357l2 2 -1 2 -2 -2zM612 388l2 1 -2 3 -2 -1zM621 394l2 2 -3 4 -2 -2zM583 432l2 1 -2 3 -2 -1zM586 433l2 2 -2 2 -2 -2zM578 455l2 1 -2 3 -2 -1zM813 137l2 2 -2 2 -2 -2zM785 177l2 1 -1 2 -2 -1zM782 186l2 1 -2 3 -2 -1zM759 207l2 2 -3 5 -2 -2zM724 268l4 3 -3 5 -4 -3zM704 287l4 3 -1 2 -4 -3zM707 304l2 1 -2 3 -2 -1zM677 344l4 3 -1 2 -4 -3zM680 339l3 2 -2 4 -3 -2zM668 342l3 2 -2 2 -3 -2zM661 370l3 2 -2 3 -3 -2zM651 382l4 3 -3 4 -4 -3zM619 408l3 2 -2 3 -3 -2zM621 408l4 3 -2 2 -4 -3zM615 430l3 2 -2 2 -3 -2zM604 430l2 2 -2 3 -2 -2zM597 456l4 3 -2 3 -4 -3zM585 473l4 3 -1 2 -4 -3zM815 174l3 2 -3 4 -3 -2zM773 225l4 3 -2 3 -4 -3zM765 249l2 2 -3 4 -2 -2zM753 258l2 2 -3 5 -2 -2zM745 261l3 2 -2 3 -3 -2zM741 273l3 2 -2 3 -3 -2zM738 293l3 2 -3 4 -3 -2zM721 304l2 1 -2 3 -2 -1zM695 336l3 2 -3 4 -3 -2zM661 400l4 3 -3 4 -4 -3zM656 400l4 3 -2 3 -4 -3zM611 450l2 2 -1 2 -2 -2zM619 446l2 2 -2 2 -2 -2zM612 456l2 2 -3 4 -2 -2zM598 477l2 2 -2 2 -2 -2zM579 499l4 2 -3 4 -4 -2zM564 523l4 3 -3 4 -4 -3zM569 532l2 2 -3 4 -2 -2zM864 142l2 2 -1 2 -2 -2zM833 183l3 2 -2 3 -3 -2zM818 190l3 2 -3 5 -3 -2zM814 201l2 1 -3 4 -2 -1zM810 213l3 2 -2 3 -3 -2zM791 225l3 2 -2 3 -3 -2zM756 293l2 1 -3 5 -2 -1zM757 292l3 2 -2 3 -3 -2zM741 301l3 2 -1 2 -3 -2zM710 350l3 2 -3 5 -3 -2zM698 358l3 2 -1 2 -3 -2zM688 394l2 1 -3 5 -2 -1zM667 405l3 2 -2 3 -3 -2zM647 438l3 2 -2 2 -3 -2zM646 453l3 2 -3 4 -3 -2zM603 503l4 2 -3 4 -4 -2zM587 523l3 2 -2 3 -3 -2zM585 538l3 2 -2 3 -3 -2zM588 535l3 2 -3 4 -3 -2zM575 548l4 3 -3 4 -4 -3zM556 571l3 2 -3 4 -3 -2zM555 571l3 2 -2 2 -3 -2zM830 201l3 2 -2 2 -3 -2zM755 311l2 2 -3 5 -2 -2zM758 309l3 2 -2 3 -3 -2zM737 347l3 2 -3 5 -3 -2zM732 356l2 2 -3 5 -2 -2zM731 363l4 3 -1 2 -4 -3zM718 364l3 2 -2 3 -3 -2zM702 382l3 2 -3 4 -3 -2zM669 444l2 1 -3 5 -2 -1zM667 438l2 1 -1 2 -2 -1zM612 515l3 2 -2 3 -3 -2zM613 516l2 1 -1 2 -2 -1zM608 517l3 2 -2 2 -3 -2zM587 546l3 2 -2 3 -3 -2zM591 561l3 2 -1 2 -3 -2zM584 563l2 2 -2 3 -2 -2zM573 582l2 1 -3 5 -2 -1zM557 592l4 3 -2 2 -4 -3zM552 608l4 3 -3 4 -4 -3zM548 619l3 2 -1 2 -3 -2zM544 619l2 2 -3 4 -2 -2zM876 179l4 2 -3 4 -4 -2zM873 189l3 2 -2 3 -3 -2zM805 280l3 2 -3 5 -3 -2zM780 320l2 1 -2 2 -2 -1zM763 344l2 1 -3 4 -2 -1zM764 341l3 2 -2 3 -3 -2zM745 372l3 2 -2 4 -3 -2zM745 362l3 2 -2 3 -3 -2zM720 392l3 2 -2 3 -3 -2zM714 397l4 3 -3 4 -4 -3zM709 405l2 2 -3 4 -2 -2zM703 430l2 1 -2 3 -2 -1zM664 482l4 3 -2 2 -4 -3zM610 561l4 3 -2 3 -4 -3zM607 563l2 2 -1 2 -2 -2zM556 623l2 1 -3 4 -2 -1zM556 633l2 2 -3 4 -2 -2zM788 333l2 1 -1 2 -2 -1zM790 327l4 3 -2 3 -4 -3zM748 389l3 2 -2 3 -3 -2zM709 456l4 3 -2 3 -4 -3zM709 452l4 3 -2 3 -4 -3zM701 460l3 2 -2 3 -3 -2zM684 474l3 2 -3 4 -3 -2zM631 566l2 1 -3 5 -2 -1zM630 568l4 3 -2 4 -4 -3zM579 624l3 2 -2 3 -3 -2zM822 312l2 1 -2 3 -2 -1zM789 359l2 1 -2 3 -2 -1zM793 362l2 1 -2 3 -2 -1zM696 493l2 1 -2 4 -2 -1zM636 572l3 2 -1 2 -3 -2zM628 606l4 3 -3 5 -4 -3zM613 627l3 2 -2 3 -3 -2zM599 637l4 3 -3 5 -4 -3zM585 649l3 2 -2 2 -3 -2zM777 406l4 3 -2 2 -4 -3zM738 457l3 2 -2 3 -3 -2zM740 474l3 2 -3 4 -3 -2zM720 486l3 2 -3 4 -3 -2zM708 502l2 1 -1 2 -2 -1zM715 494l2 2 -2 3 -2 -2zM714 504l4 3 -3 4 -4 -3zM701 530l2 2 -2 2 -2 -2zM682 545l2 2 -1 2 -2 -2zM673 558l2 1 -1 2 -2 -1zM675 558l4 3 -2 3 -4 -3zM675 551l4 3 -2 3 -4 -3zM672 572l3 2 -1 2 -3 -2zM649 585l2 1 -3 4 -2 -1zM643 608l2 2 -3 5 -2 -2zM640 604l2 1 -2 3 -2 -1zM633 616l2 2 -2 3 -2 -2zM641 619l2 2 -1 2 -2 -2zM617 652l4 3 -2 3 -4 -3zM742 502l3 2 -1 2 -3 -2zM719 519l3 2 -1 2 -3 -2zM722 527l3 2 -3 4 -3 -2zM713 544l4 3 -2 3 -4 -3zM686 565l2 1 -2 3 -2 -1zM678 585l4 3 -3 4 -4 -3zM656 606l4 3 -1 2 -4 -3zM644 646l3 2 -2 3 -3 -2zM639 638l3 2 -3 5 -3 -2zM710 563l2 1 -3 4 -2 -1zM713 571l3 2 -1 2 -3 -2zM717 560l3 2 -2 3 -3 -2zM691 597l4 3 -1 2 -4 -3zM690 610l2 2 -1 2 -2 -2zM652 659l4 3 -3 5 -4 -3zM637 669l4 3 -2 2 -4 -3zM697 649l4 2 -2 2 -4 -2zM707 673l2 1 -1 2 -2 -1z"/><path fill="#fff" fill-opacity="0.6" d="M642 100l3 2 -2 3 -3 -2zM670 91l3 2 -2 3 -3 -2zM644 122l2 1 -3 4 -2 -1zM672 118l3 2 -2 3 -3 -2zM640 181l4 3 -3 4 -4 -3zM666 152l3 2 -3 4 -3 -2zM663 157l4 3 -1 2 -4 -3zM632 199l2 1 -3 4 -2 -1zM623 214l3 2 -2 3 -3 -2zM715 118l2 1 -2 2 -2 -1zM667 184l2 1 -1 2 -2 -1zM662 191l2 1 -2 3 -2 -1zM646 213l2 1 -3 4 -2 -1zM634 228l4 3 -3 5 -4 -3zM635 249l2 2 -1 2 -2 -2zM629 238l3 2 -2 3 -3 -2zM607 268l2 1 -3 4 -2 -1zM726 133l4 3 -3 4 -4 -3zM729 131l2 1 -2 3 -2 -1zM693 180l4 2 -2 3 -4 -2zM692 190l2 1 -3 5 -2 -1zM669 232l3 2 -3 5 -3 -2zM656 231l2 1 -1 2 -2 -1zM659 240l4 3 -1 2 -4 -3zM763 113l2 1 -2 3 -2 -1zM745 143l3 2 -3 4 -3 -2zM745 151l3 2 -1 2 -3 -2zM742 137l2 1 -2 3 -2 -1zM722 181l4 2 -3 4 -4 -2zM714 189l3 2 -2 3 -3 -2zM709 189l2 2 -3 5 -2 -2zM679 230l3 2 -3 4 -3 -2zM668 252l4 3 -2 3 -4 -3zM680 249l3 2 -2 3 -3 -2zM638 297l3 2 -2 3 -3 -2zM640 285l2 2 -1 2 -2 -2zM616 318l3 2 -3 5 -3 -2zM782 124l2 2 -3 4 -2 -2zM780 129l3 2 -2 3 -3 -2zM767 156l3 2 -2 3 -3 -2zM765 153l3 2 -3 5 -3 -2zM725 194l3 2 -3 4 -3 -2zM718 202l2 2 -2 3 -2 -2zM720 211l4 3 -1 2 -4 -3zM694 251l4 3 -3 5 -4 -3zM705 243l2 2 -3 4 -2 -2zM671 286l2 1 -2 2 -2 -1zM659 288l2 2 -1 2 -2 -2zM627 352l2 2 -2 3 -2 -2zM610 361l2 2 -2 2 -2 -2zM605 370l3 2 -1 2 -3 -2zM611 377l2 2 -2 3 -2 -2zM784 139l2 1 -3 4 -2 -1zM783 154l3 2 -2 3 -3 -2zM731 219l4 3 -2 3 -4 -3zM734 234l2 2 -2 2 -2 -2zM724 244l3 2 -2 2 -3 -2zM713 260l2 1 -2 3 -2 -1zM699 261l3 2 -2 2 -3 -2zM693 284l3 2 -1 2 -3 -2zM688 284l4 3 -2 2 -4 -3zM693 281l2 2 -2 2 -2 -2zM676 294l3 2 -2 3 -3 -2zM647 344l3 2 -2 2 -3 -2zM645 356l4 3 -3 4 -4 -3zM632 375l2 1 -1 2 -2 -1zM625 368l3 2 -2 3 -3 -2zM622 389l2 1 -3 4 -2 -1zM622 384l2 1 -3 4 -2 -1zM598 424l4 3 -2 3 -4 -3zM581 442l4 3 -2 4 -4 -3zM574 446l3 2 -3 4 -3 -2zM784 179l3 2 -3 4 -3 -2zM728 273l4 3 -1 2 -4 -3zM667 354l3 2 -1 2 -3 -2zM645 371l3 2 -2 3 -3 -2zM580 473l3 2 -3 4 -3 -2zM840 141l3 2 -2 3 -3 -2zM823 154l2 1 -2 2 -2 -1zM789 202l2 1 -3 5 -2 -1zM769 235l3 2 -1 2 -3 -2zM762 244l4 3 -1 2 -4 -3zM745 264l3 2 -3 4 -3 -2zM748 257l3 2 -2 3 -3 -2zM732 300l2 1 -2 3 -2 -1zM731 295l2 1 -2 3 -2 -1zM718 301l3 2 -2 4 -3 -2zM711 321l3 2 -3 4 -3 -2zM716 317l2 2 -3 4 -2 -2zM697 335l3 2 -2 3 -3 -2zM693 331l2 1 -2 2 -2 -1zM695 336l2 1 -2 3 -2 -1zM683 369l2 1 -3 5 -2 -1zM660 381l3 2 -3 4 -3 -2zM667 383l2 1 -1 2 -2 -1zM609 455l2 1 -1 2 -2 -1zM613 446l4 3 -3 4 -4 -3zM854 136l3 2 -2 2 -3 -2zM860 139l2 1 -3 4 -2 -1zM830 185l3 2 -2 2 -3 -2zM807 209l4 3 -2 2 -4 -3zM771 258l3 2 -2 3 -3 -2zM772 251l2 1 -1 2 -2 -1zM759 284l4 3 -3 5 -4 -3zM723 328l2 1 -3 4 -2 -1zM716 342l2 1 -2 3 -2 -1zM711 338l3 2 -2 2 -3 -2zM674 407l3 2 -1 2 -3 -2zM622 470l2 2 -3 4 -2 -2zM622 471l3 2 -3 4 -3 -2zM559 568l2 1 -2 3 -2 -1zM880 152l3 2 -2 2 -3 -2zM840 188l2 1 -2 2 -2 -1zM838 187l3 2 -3 4 -3 -2zM765 294l2 2 -2 3 -2 -2zM753 310l3 2 -2 3 -3 -2zM738 345l4 3 -3 4 -4 -3zM723 367l3 2 -2 3 -3 -2zM652 464l2 2 -3 4 -2 -2zM632 484l4 3 -2 3 -4 -3zM624 496l4 3 -2 4 -4 -3zM616 518l3 2 -2 2 -3 -2zM586 562l3 2 -3 5 -3 -2zM565 592l2 1 -3 4 -2 -1zM564 591l4 3 -2 3 -4 -3zM556 611l4 3 -2 3 -4 -3zM554 612l2 2 -1 2 -2 -2zM887 172l3 2 -1 2 -3 -2zM882 175l4 3 -2 3 -4 -3zM871 178l2 1 -2 3 -2 -1zM870 176l2 1 -3 4 -2 -1zM870 187l2 2 -3 5 -2 -2zM805 274l2 1 -2 3 -2 -1zM802 276l3 2 -2 2 -3 -2zM791 291l3 2 -3 4 -3 -2zM781 301l4 3 -2 3 -4 -3zM783 308l3 2 -2 3 -3 -2zM768 324l4 3 -3 4 -4 -3zM709 428l3 2 -2 3 -3 -2zM690 455l3 2 -3 4 -3 -2zM679 455l4 3 -3 4 -4 -3zM690 455l3 2 -3 5 -3 -2zM637 516l3 2 -3 4 -3 -2zM633 516l2 1 -1 2 -2 -1zM620 541l2 1 -1 2 -2 -1zM601 568l2 1 -2 3 -2 -1zM575 604l2 2 -3 5 -2 -2zM556 631l4 3 -1 2 -4 -3zM551 650l3 2 -2 3 -3 -2zM546 636l3 2 -2 3 -3 -2zM841 255l3 2 -3 4 -3 -2zM832 276l3 2 -2 3 -3 -2zM833 279l2 2 -2 3 -2 -2zM824 274l2 1 -2 3 -2 -1zM819 291l4 3 -3 4 -4 -3zM821 286l3 2 -2 3 -3 -2zM813 305l4 3 -3 4 -4 -3zM804 312l2 2 -2 2 -2 -2zM792 339l3 2 -3 4 -3 -2zM747 384l4 3 -2 3 -4 -3zM749 389l2 2 -2 2 -2 -2zM745 408l2 1 -2 3 -2 -1zM735 406l4 3 -1 2 -4 -3zM734 411l3 2 -2 3 -3 -2zM736 412l3 2 -1 2 -3 -2zM730 419l2 1 -1 2 -2 -1zM706 442l3 2 -2 3 -3 -2zM689 464l2 1 -2 3 -2 -1zM693 458l4 3 -2 2 -4 -3zM685 482l3 2 -2 3 -3 -2zM681 490l4 3 -2 3 -4 -3zM649 543l2 2 -3 4 -2 -2zM652 540l3 2 -2 3 -3 -2zM627 562l2 1 -2 2 -2 -1zM821 330l2 2 -3 5 -2 -2zM728 446l4 2 -2 2 -4 -2zM731 453l3 2 -2 3 -3 -2zM707 473l2 1 -2 3 -2 -1zM709 482l2 1 -3 4 -2 -1zM684 524l3 2 -2 3 -3 -2zM668 529l2 1 -2 2 -2 -1zM671 531l3 2 -2 3 -3 -2zM624 594l3 2 -1 2 -3 -2zM610 609l2 1 -2 3 -2 -1zM599 624l3 2 -2 3 -3 -2zM607 623l3 2 -2 2 -3 -2zM602 624l3 2 -3 4 -3 -2zM606 637l2 2 -3 4 -2 -2zM599 633l3 2 -3 4 -3 -2zM591 635l2 1 -2 2 -2 -1zM774 407l2 1 -3 4 -2 -1zM765 423l4 3 -3 4 -4 -3zM767 424l4 3 -2 2 -4 -3zM712 505l4 3 -2 4 -4 -3zM713 493l2 2 -3 4 -2 -2zM709 502l3 2 -1 2 -3 -2zM676 561l3 2 -3 4 -3 -2zM675 566l4 2 -1 2 -4 -2zM646 605l2 2 -3 4 -2 -2zM612 651l4 3 -2 3 -4 -3zM610 639l4 3 -3 5 -4 -3zM741 498l3 2 -2 3 -3 -2zM745 500l4 3 -3 4 -4 -3zM729 502l2 1 -2 3 -2 -1zM735 515l2 1 -3 4 -2 -1zM728 516l2 1 -3 4 -2 -1zM724 520l2 1 -3 5 -2 -1zM715 541l2 1 -1 2 -2 -1zM675 600l2 2 -2 3 -2 -2zM665 612l3 2 -2 3 -3 -2zM637 639l4 3 -2 3 -4 -3zM724 548l3 2 -2 2 -3 -2zM705 572l3 2 -2 2 -3 -2zM702 570l3 2 -2 3 -3 -2zM692 586l3 2 -2 2 -3 -2zM669 626l3 2 -3 4 -3 -2zM664 657l4 3 -2 4 -4 -3zM672 665l4 3 -2 3 -4 -3zM713 625l2 1 -3 4 -2 -1zM705 653l3 2 -1 2 -3 -2zM696 647l3 2 -3 4 -3 -2zM683 683l4 3 -1 2 -4 -3zM712 668l2 1 -2 3 -2 -1z"/><path fill="#fff" fill-opacity="0.9" d="M650 146l2 2 -3 4 -2 -2zM630 184l3 2 -2 3 -3 -2zM630 170l3 2 -1 2 -3 -2zM663 171l2 1 -1 2 -2 -1zM641 198l3 2 -3 5 -3 -2zM627 218l2 1 -1 2 -2 -1zM715 125l4 3 -3 5 -4 -3zM647 212l4 3 -1 2 -4 -3zM640 236l3 2 -3 4 -3 -2zM633 252l3 2 -1 2 -3 -2zM631 239l4 3 -2 2 -4 -3zM633 239l3 2 -3 4 -3 -2zM616 261l4 3 -2 2 -4 -3zM619 251l2 1 -3 4 -2 -1zM712 166l2 1 -2 3 -2 -1zM697 179l4 3 -1 2 -4 -3zM696 181l3 2 -2 3 -3 -2zM626 278l4 3 -3 5 -4 -3zM613 299l2 2 -3 4 -2 -2zM612 292l3 2 -2 3 -3 -2zM764 111l3 2 -2 3 -3 -2zM762 116l3 2 -3 5 -3 -2zM749 134l3 2 -3 4 -3 -2zM734 148l2 1 -2 2 -2 -1zM727 177l3 2 -3 5 -3 -2zM708 187l3 2 -1 2 -3 -2zM634 294l2 2 -2 2 -2 -2zM636 307l3 2 -3 4 -3 -2zM629 313l3 2 -3 4 -3 -2zM597 353l3 2 -3 5 -3 -2zM600 359l3 2 -3 4 -3 -2zM595 354l2 1 -3 4 -2 -1zM739 194l2 1 -2 3 -2 -1zM745 188l4 3 -3 5 -4 -3zM735 184l3 2 -2 3 -3 -2zM733 198l3 2 -2 3 -3 -2zM714 218l3 2 -2 4 -3 -2zM722 212l3 2 -3 4 -3 -2zM707 237l3 2 -3 5 -3 -2zM712 228l2 2 -3 4 -2 -2zM682 265l2 1 -3 4 -2 -1zM666 290l3 2 -3 4 -3 -2zM641 316l2 2 -2 2 -2 -2zM637 342l2 1 -1 2 -2 -1zM635 338l2 2 -2 3 -2 -2zM623 342l2 1 -3 4 -2 -1zM611 358l3 2 -1 2 -3 -2zM792 151l3 2 -2 3 -3 -2zM782 154l2 2 -2 3 -2 -2zM752 198l4 3 -3 4 -4 -3zM747 200l3 2 -2 3 -3 -2zM726 245l3 2 -2 3 -3 -2zM719 234l3 2 -3 4 -3 -2zM713 252l4 2 -1 2 -4 -2zM692 271l4 2 -2 3 -4 -2zM678 305l4 3 -3 4 -4 -3zM679 294l3 2 -1 2 -3 -2zM663 329l3 2 -2 2 -3 -2zM655 342l3 2 -1 2 -3 -2zM631 376l2 1 -1 2 -2 -1zM608 395l3 2 -2 3 -3 -2zM613 403l2 1 -3 5 -2 -1zM821 139l4 3 -2 3 -4 -3zM814 128l2 1 -3 4 -2 -1zM825 132l4 3 -3 4 -4 -3zM788 181l2 1 -3 4 -2 -1zM790 186l4 3 -2 4 -4 -3zM755 217l2 1 -1 2 -2 -1zM729 274l4 3 -2 3 -4 -3zM709 294l2 2 -2 3 -2 -2zM674 338l3 2 -3 4 -3 -2zM680 336l3 2 -2 3 -3 -2zM659 350l4 3 -3 4 -4 -3zM640 389l4 3 -3 4 -4 -3zM643 377l2 2 -2 3 -2 -2zM633 405l3 2 -1 2 -3 -2zM637 396l2 1 -3 5 -2 -1zM612 421l3 2 -2 3 -3 -2zM603 449l3 2 -3 4 -3 -2zM586 456l4 3 -3 4 -4 -3zM590 454l4 3 -1 2 -4 -3zM819 174l4 3 -1 2 -4 -3zM795 191l4 3 -2 3 -4 -3zM791 194l2 1 -3 4 -2 -1zM793 201l3 2 -3 5 -3 -2zM738 276l3 2 -2 3 -3 -2zM719 309l4 2 -3 5 -4 -2zM720 300l3 2 -3 4 -3 -2zM711 314l3 2 -3 5 -3 -2zM702 339l4 3 -3 4 -4 -3zM677 362l3 2 -1 2 -3 -2zM680 370l3 2 -1 2 -3 -2zM668 379l3 2 -2 3 -3 -2zM662 380l2 1 -2 3 -2 -1zM658 393l3 2 -2 3 -3 -2zM650 407l3 2 -3 4 -3 -2zM621 442l3 2 -2 3 -3 -2zM628 446l4 3 -1 2 -4 -3zM624 444l4 3 -2 3 -4 -3zM615 455l3 2 -2 3 -3 -2zM603 470l4 3 -2 2 -4 -3zM598 477l2 2 -3 5 -2 -2zM835 172l2 1 -2 3 -2 -1zM822 197l3 2 -3 4 -3 -2zM778 258l3 2 -1 2 -3 -2zM767 259l2 1 -2 3 -2 -1zM751 281l3 2 -2 3 -3 -2zM742 294l3 2 -3 5 -3 -2zM701 354l3 2 -2 3 -3 -2zM692 374l3 2 -3 4 -3 -2zM665 404l2 1 -2 3 -2 -1zM654 428l2 1 -3 4 -2 -1zM649 428l2 1 -1 2 -2 -1zM653 428l3 2 -3 4 -3 -2zM602 494l4 2 -1 2 -4 -2zM613 498l3 2 -2 3 -3 -2zM598 507l2 1 -1 2 -2 -1zM585 534l2 2 -2 3 -2 -2zM585 537l3 2 -3 5 -3 -2zM580 543l4 3 -3 5 -4 -3zM564 556l2 2 -2 3 -2 -2zM576 550l4 3 -3 4 -4 -3zM562 569l3 2 -3 4 -3 -2zM886 138l4 2 -2 3 -4 -2zM827 203l2 2 -1 2 -2 -2zM838 205l4 2 -3 4 -4 -2zM816 240l2 2 -3 5 -2 -2zM818 238l4 3 -2 3 -4 -3zM765 299l4 3 -1 2 -4 -3zM772 298l2 1 -3 4 -2 -1zM738 338l3 2 -2 3 -3 -2zM729 349l4 3 -1 2 -4 -3zM717 377l3 2 -3 4 -3 -2zM681 425l3 2 -2 3 -3 -2zM675 435l2 1 -3 4 -2 -1zM655 452l3 2 -1 2 -3 -2zM649 477l3 2 -2 2 -3 -2zM645 467l3 2 -1 2 -3 -2zM637 489l2 2 -3 5 -2 -2zM635 486l4 3 -2 3 -4 -3zM621 519l3 2 -3 4 -3 -2zM599 548l2 2 -2 2 -2 -2zM592 543l3 2 -2 4 -3 -2zM577 564l2 1 -1 2 -2 -1zM573 571l3 2 -2 3 -3 -2zM578 575l2 2 -3 5 -2 -2zM868 184l2 1 -3 5 -2 -1zM780 304l4 3 -2 2 -4 -3zM766 323l3 2 -1 2 -3 -2zM776 322l3 2 -2 3 -3 -2zM760 339l4 3 -3 4 -4 -3zM762 337l4 3 -1 2 -4 -3zM763 334l2 1 -3 4 -2 -1zM765 342l3 2 -3 4 -3 -2zM744 367l3 2 -1 2 -3 -2zM720 397l3 2 -3 5 -3 -2zM709 408l4 3 -3 5 -4 -3zM698 430l4 3 -1 2 -4 -3zM688 444l2 2 -3 5 -2 -2zM650 498l2 2 -3 5 -2 -2zM638 520l4 3 -2 3 -4 -3zM636 524l4 3 -3 4 -4 -3zM621 537l2 1 -2 2 -2 -1zM622 546l3 2 -2 3 -3 -2zM577 608l3 2 -2 3 -3 -2zM570 602l3 2 -3 4 -3 -2zM570 604l2 1 -3 5 -2 -1zM558 626l2 2 -2 3 -2 -2zM546 639l3 2 -3 4 -3 -2zM543 642l2 2 -3 5 -2 -2zM836 256l2 1 -1 2 -2 -1zM839 271l2 1 -2 3 -2 -1zM832 271l3 2 -2 3 -3 -2zM822 296l2 2 -1 2 -2 -2zM811 302l3 2 -3 5 -3 -2zM817 302l2 2 -3 4 -2 -2zM799 325l4 3 -3 5 -4 -3zM787 324l2 2 -3 4 -2 -2zM753 387l3 2 -3 4 -3 -2zM732 424l4 3 -2 3 -4 -3zM714 441l2 1 -2 3 -2 -1zM718 438l4 3 -3 4 -4 -3zM698 473l4 3 -1 2 -4 -3zM704 466l4 3 -3 4 -4 -3zM683 483l4 3 -3 4 -4 -3zM672 492l3 2 -2 2 -3 -2zM680 500l4 3 -2 3 -4 -3zM660 527l2 2 -2 2 -2 -2zM659 520l4 3 -2 2 -4 -3zM643 540l3 2 -3 4 -3 -2zM654 536l2 2 -2 4 -2 -2zM639 540l4 2 -3 4 -4 -2zM619 568l3 2 -3 4 -3 -2zM621 563l4 3 -1 2 -4 -3zM571 637l2 1 -2 3 -2 -1zM823 317l3 2 -2 3 -3 -2zM819 330l2 2 -2 3 -2 -2zM750 421l2 2 -3 5 -2 -2zM697 503l4 3 -2 2 -4 -3zM676 517l2 1 -2 3 -2 -1zM677 512l2 2 -2 3 -2 -2zM678 510l3 2 -1 2 -3 -2zM669 540l2 2 -1 2 -2 -2zM641 572l3 2 -3 4 -3 -2zM613 609l3 2 -2 4 -3 -2zM595 650l2 1 -2 3 -2 -1zM581 650l4 3 -3 4 -4 -3zM776 403l2 1 -2 3 -2 -1zM769 413l4 3 -3 4 -4 -3zM736 478l3 2 -3 4 -3 -2zM721 488l2 1 -3 4 -2 -1zM724 476l2 2 -3 4 -2 -2zM722 504l4 3 -3 5 -4 -3zM679 545l3 2 -1 2 -3 -2zM682 556l3 2 -2 2 -3 -2zM658 586l4 2 -2 3 -4 -2zM635 627l2 2 -2 2 -2 -2zM631 625l3 2 -2 3 -3 -2zM614 647l3 2 -3 4 -3 -2zM612 640l3 2 -3 5 -3 -2zM731 506l2 1 -1 2 -2 -1zM705 541l2 1 -3 4 -2 -1zM711 549l4 2 -2 3 -4 -2zM704 550l3 2 -3 4 -3 -2zM700 561l4 2 -2 3 -4 -2zM688 567l3 2 -3 4 -3 -2zM684 573l3 2 -1 2 -3 -2zM680 589l2 1 -2 3 -2 -1zM666 598l4 2 -1 2 -4 -2zM669 592l3 2 -1 2 -3 -2zM640 630l2 1 -3 4 -2 -1zM650 632l2 2 -1 2 -2 -2zM632 644l2 2 -3 4 -2 -2zM630 657l3 2 -1 2 -3 -2zM708 565l2 2 -2 3 -2 -2zM700 578l2 2 -2 3 -2 -2zM691 589l3 2 -1 2 -3 -2zM686 616l4 3 -1 2 -4 -3zM685 606l2 2 -2 3 -2 -2zM652 659l3 2 -3 5 -3 -2zM645 670l2 2 -3 4 -2 -2zM676 646l2 1 -2 3 -2 -1zM681 645l2 2 -2 2 -2 -2zM659 663l2 2 -2 3 -2 -2zM714 623l4 3 -3 4 -4 -3zM703 649l2 1 -1 2 -2 -1zM707 664l3 2 -3 4 -3 -2z"/><path fill="none" stroke="#fff" stroke-width="1.4" stroke-opacity="0.5" d="M650 98l3 2M647 93l6 4M637 102l9 7M646 94l4 2M666 92l4 3M654 126l-2 3M654 125l-2 3M640 136l4 3M706 106l-4 6M707 92l-6 9M699 120l-2 3M676 157l-2 3M667 157l5 4M673 166l3 2M662 158l-4 6M653 173l-7 9M655 173l-5 7M659 181l3 2M659 172l6 4M636 197l-4 6M636 217l3 2M619 219l-6 8M725 109l-4 6M724 117l-2 3M716 133l3 2M668 186l4 3M669 181l-2 4M671 175l-4 6M670 181l5 4M656 196l10 7M656 201l-5 6M652 213l4 2M636 232l7 5M647 233l3 2M634 249l-2 3M626 259l3 2M617 260l-5 7M617 261l5 3M617 275l-2 3M614 271l-3 5M604 276l8 5M612 273l-3 5M733 130l-4 6M730 132l-3 4M707 168l-3 4M698 182l-3 4M695 193l-2 3M672 219l5 3M662 219l8 5M656 239l-3 4M644 256l-4 6M649 257l-2 3M612 293l9 6M769 113l-3 4M764 120l4 3M750 136l-3 4M725 183l3 2M727 182l-2 3M720 178l5 3M722 174l3 2M724 180l-2 3M717 188l-3 4M699 200l-4 6M699 206l6 4M689 215l8 6M696 223l-2 3M696 215l5 4M694 220l3 2M680 240l4 3M664 252l8 5M670 243l-5 8M647 274l10 7M656 278l3 2M656 278l3 2M642 300l3 2M619 323l-3 4M615 327l-3 5M604 348l4 3M592 352l-5 7M780 134l-2 3M770 129l7 5M777 138l-2 3M753 160l-3 5M740 182l4 3M738 182l-5 7M719 209l8 5M688 247l-6 9M693 250l-3 4M701 244l-2 3M671 291l3 2M662 293l5 4M670 294l-2 3M666 289l-2 3M644 332l3 2M620 366l-2 3M606 382l-2 3M602 385l-2 3M607 378l-2 3M793 141l4 3M797 143l3 2M751 194l-4 6M750 209l3 2M736 212l-6 8M708 249l-4 6M714 256l-2 3M696 266l5 3M659 329l6 4M651 349l-2 3M649 347l4 3M639 361l-3 4M620 396l-2 3M625 385l-2 3M603 404l-4 6M605 397l5 4M610 401l-2 3M604 418l3 2M600 414l-3 4M594 432l3 2M582 434l-3 4M583 433l3 2M574 449l5 3M815 134l8 5M786 189l3 2M781 195l-2 3M778 199l-2 3M767 212l-2 3M754 216l-6 9M729 273l-2 3M717 267l-6 8M707 296l4 3M675 338l6 4M673 339l-3 4M672 345l4 3M659 353l4 2M656 373l3 2M634 393l-4 6M631 405l-3 4M625 397l10 7M631 392l4 3M627 420l-2 3M627 418l3 2M607 427l8 6M609 422l-7 10M607 430l-5 6M599 437l7 5M597 455l-2 3M595 454l4 3M587 475l3 2M572 474l-3 5M586 470l4 3M834 149l3 2M826 157l5 3M827 164l3 2M828 156l4 3M824 167l3 2M806 170l4 3M804 183l-3 4M801 189l6 4M798 201l-2 3M775 238l-2 3M756 245l5 3M758 258l-2 3M735 275l-5 7M747 277l-2 3M733 293l-2 3M723 311l-2 3M708 323l6 4M696 340l-4 6M685 365l3 2M683 360l-2 4M671 363l-7 11M674 382l-2 3M672 376l-3 4M655 399l5 3M662 396l3 2M664 393l-2 3M626 431l3 2M637 437l-2 3M625 432l-6 9M615 459l-3 4M606 463l-4 6M603 468l4 3M596 491l3 2M588 482l-6 8M598 478l-5 6M594 480l5 3M586 493l-5 7M561 530l-3 5M861 136l-3 5M856 145l4 3M837 168l5 3M842 171l3 2M827 181l-5 7M812 197l-6 9M794 231l5 3M794 225l-4 6M801 232l-2 3M781 262l-2 3M748 307l-2 3M723 337l3 2M719 335l-5 7M731 330l3 2M720 343l3 2M702 374l-2 3M696 369l-5 7M693 371l4 3M699 371l-3 4M684 389l-4 5M684 383l8 6M691 389l-2 3M668 404l7 5M670 400l-5 7M647 438l-4 5M650 427l8 6M640 441l8 6M641 454l-2 3M629 475l-2 3M617 480l7 5M603 494l-2 3M610 499l3 2M610 496l-3 4M607 505l3 2M597 519l3 2M590 529l3 2M576 552l-2 3M884 139l3 2M874 156l-2 3M875 157l-2 3M873 143l-6 8M879 147l-2 3M846 192l-3 4M834 206l-2 3M776 300l-2 3M755 309l-7 10M755 307l-7 10M742 349l3 2M730 342l-6 8M738 345l4 3M712 374l8 6M711 393l-2 3M708 387l5 3M680 437l3 2M667 443l5 4M660 458l-2 4M652 471l3 2M638 476l7 5M637 491l-2 3M627 503l-2 4M625 501l7 5M626 506l-3 4M610 515l-5 7M610 516l-6 9M599 544l4 3M597 545l-4 5M588 564l-2 3M581 567l5 4M568 575l-6 8M577 583l3 2M579 577l-2 3M552 613l4 2M539 623l6 4M878 182l-2 3M862 185l-6 9M857 206l-2 3M808 275l5 4M814 276l-2 3M805 270l-3 5M787 293l-3 5M787 316l3 2M775 320l-4 6M776 317l-3 4M774 325l4 2M760 337l8 6M759 340l-4 6M716 397l10 7M723 398l-3 4M718 399l-4 6M704 422l5 4M694 434l7 5M692 440l-4 5M691 436l-3 4M674 453l4 3M667 466l-5 8M674 466l-4 5M656 499l-2 3M655 503l3 2M649 496l-4 5M650 497l-3 4M626 543l-2 3M608 551l-6 9M595 570l7 5M605 576l-2 3M574 603l8 5M579 597l-3 5M560 638l3 2M538 648l-7 10M549 651l3 2M544 640l-6 9M840 260l4 3M834 262l-4 6M830 266l4 3M835 279l3 2M821 289l-2 3M815 284l-6 9M806 297l10 7M805 305l-3 4M815 301l3 2M797 313l-5 7M796 314l-3 4M806 320l3 2M787 327l-4 5M795 334l3 2M790 326l6 4M784 334l4 3M755 388l-2 3M735 409l4 3M735 406l4 3M731 419l3 2M717 441l-2 3M703 455l4 3M700 469l3 2M691 478l3 2M687 477l-4 6M674 485l-5 7M677 499l3 2M679 499l-2 3M680 493l3 2M650 528l-4 6M640 533l-7 11M624 562l7 5M620 569l5 4M619 586l-2 3M607 581l-5 7M610 580l3 2M575 647l-2 3M571 648l-2 3M832 312l3 2M829 310l4 3M829 307l3 2M806 329l10 7M801 347l5 4M805 345l-3 4M793 349l-6 9M794 359l4 3M756 422l-2 3M755 426l-2 3M729 451l-2 3M735 449l3 2M729 444l-3 5M732 451l3 2M736 451l-2 3M707 491l3 2M704 491l-3 4M694 506l3 2M692 497l-5 7M692 501l-4 6M688 511l3 2M670 530l-5 7M661 541l7 5M655 549l5 4M658 552l-2 3M635 575l-5 7M620 616l3 2M619 602l3 2M612 610l4 3M607 616l-4 6M589 638l4 3M596 644l4 2M604 635l3 2M760 427l10 7M767 419l4 2M764 428l-4 5M748 452l7 5M741 453l-3 4M730 471l-5 7M740 467l-3 5M731 489l3 2M733 487l-2 3M697 527l-4 5M692 543l3 2M676 563l-2 3M662 578l-2 4M668 573l-2 3M656 575l-6 8M653 596l3 2M629 620l8 5M637 625l-2 3M624 637l-2 3M625 628l-4 6M626 632l-2 3M625 626l6 4M626 631l-3 4M614 647l-4 5M609 645l5 3M743 502l-2 3M723 521l3 2M714 527l7 5M727 522l-2 3M720 531l3 2M706 539l-2 3M701 564l-2 3M704 552l4 3M708 553l3 2M687 569l-3 4M694 572l-2 3M678 583l-3 5M670 605l-2 3M664 609l4 3M658 622l3 2M652 631l-2 3M632 645l4 3M641 645l3 2M629 663l-2 3M625 656l-4 6M727 553l-2 3M725 545l-2 3M718 561l4 3M713 569l-2 3M714 563l7 5M704 588l3 2M704 579l4 3M689 593l-5 8M686 611l3 2M679 605l9 6M687 612l3 2M665 623l-8 11M665 635l6 4M655 638l4 3M659 637l7 5M647 655l8 6M648 647l8 5M639 665l4 3M647 669l-2 3M643 668l-2 3M681 646l-3 4M684 646l-2 3M677 652l-3 4M678 643l-6 8M667 660l-5 7M673 665l-2 3M720 630l3 2M709 630l-5 8M695 648l8 5M680 666l8 6M703 666l-5 8"/><path fill="none" stroke="#fff" stroke-width="1.4" stroke-opacity="0.85" d="M648 106l3 2M672 90l-4 6M671 103l-2 3M669 91l4 3M635 135l9 7M643 144l-2 3M640 140l3 2M631 139l8 5M636 140l-4 5M679 114l-3 4M674 125l-2 3M676 129l3 2M647 148l-6 8M654 144l3 2M659 145l4 3M654 146l-3 4M659 154l-2 3M631 179l5 4M637 182l3 2M638 178l-2 3M710 107l3 2M715 100l-2 3M704 119l3 2M701 122l-2 3M697 118l-2 3M701 116l-2 3M640 190l-3 5M648 185l6 4M645 191l-3 4M645 181l-5 7M623 216l7 5M679 182l-2 3M669 197l3 2M653 209l5 3M648 208l-5 7M643 230l3 2M615 261l-2 3M621 249l-4 6M730 141l3 2M736 135l-2 3M711 163l4 3M690 197l3 2M670 220l4 3M665 225l-3 4M654 238l-5 7M650 239l5 4M654 244l4 3M654 239l-3 4M652 254l3 2M647 251l-2 4M625 282l-3 5M626 287l4 3M611 295l-7 10M766 113l-4 5M763 122l4 3M750 129l-6 9M742 152l3 2M749 149l-2 3M724 167l-4 5M709 187l9 6M697 201l7 5M686 218l6 4M688 215l-3 5M690 225l-3 4M677 239l3 2M681 230l4 3M653 276l3 2M645 278l-7 10M638 293l3 2M641 290l-5 7M630 321l3 2M627 323l-2 3M616 316l11 7M782 134l-2 3M778 134l-2 3M776 124l8 6M768 150l3 2M766 146l5 4M765 157l3 2M759 152l6 4M762 151l-4 6M734 180l5 3M718 216l4 3M705 237l4 2M704 232l3 2M701 246l3 2M686 260l4 3M690 264l-2 3M691 256l4 3M688 260l4 3M687 264l-2 3M660 284l-7 10M658 305l-2 3M647 328l-2 3M641 317l9 6M639 331l3 2M630 334l-6 8M628 350l-2 3M633 346l-2 3M615 367l3 2M612 362l5 4M601 376l-4 6M795 142l-2 3M792 129l10 7M793 137l5 3M790 151l3 2M785 155l4 3M748 199l-4 6M746 214l3 2M738 212l-4 6M733 235l3 2M723 240l5 4M714 249l-4 6M694 272l9 6M703 279l-2 3M690 291l-2 3M695 290l3 2M693 285l4 3M681 303l3 2M678 301l6 4M673 298l-6 9M657 335l5 3M648 334l4 3M648 345l5 3M625 379l-3 4M623 373l-4 6M610 389l-4 6M616 381l5 3M608 398l-5 7M602 423l-2 3M583 436l-5 7M586 428l-5 7M583 430l-4 5M820 138l-2 3M781 198l-2 3M779 189l5 4M763 212l5 4M768 209l4 3M752 224l-3 4M726 271l-2 3M710 296l-2 3M670 354l3 2M656 354l-6 9M663 354l7 5M651 374l4 3M658 370l-2 3M655 363l-3 4M643 387l4 3M643 383l-4 6M637 395l-2 3M620 413l-3 5M615 412l11 8M626 414l3 2M596 440l11 7M589 449l-5 7M585 455l9 6M833 144l-3 4M841 141l3 2M825 161l-2 3M826 158l4 3M818 156l-5 7M812 173l5 3M807 171l10 7M774 238l3 2M765 251l3 2M767 247l-2 3M766 250l-2 3M763 256l-2 3M754 256l5 4M749 254l-7 10M752 265l3 2M736 275l7 5M722 291l4 3M718 309l5 3M715 301l-5 7M712 315l-3 4M681 370l3 2M678 357l8 5M671 383l3 2M674 376l-2 3M655 390l-5 8M661 401l3 2M643 413l-3 4M649 402l6 4M631 439l-2 3M616 454l-3 4M613 469l-2 3M596 482l6 4M598 478l4 3M589 491l-3 4M581 495l-6 8M574 526l3 2M860 143l-2 3M851 137l6 4M862 133l6 4M835 170l4 3M847 168l-2 3M832 187l3 2M814 198l-3 4M805 212l4 2M811 212l3 2M793 224l7 5M803 228l-2 3M775 249l8 6M778 258l-2 4M744 304l-3 4M741 305l-3 5M750 306l-2 3M748 307l3 2M754 301l-2 3M721 326l-2 3M724 326l-4 6M720 343l-2 3M711 345l3 2M697 361l-4 5M701 374l3 2M681 387l8 5M680 393l-2 3M674 408l3 2M678 404l3 2M675 403l5 3M623 486l-2 3M625 483l-2 3M625 474l-3 4M623 481l-2 3M604 503l-3 5M596 518l4 3M578 530l10 7M570 549l-3 4M567 564l-2 3M885 139l-2 3M892 134l3 2M878 136l-4 6M877 157l-2 3M848 195l3 2M841 199l-3 4M836 193l4 3M837 198l-4 5M836 205l-2 3M832 204l-4 5M837 208l-2 3M810 236l-3 4M814 236l-2 3M819 240l3 2M770 303l-2 3M760 312l4 3M763 313l-2 3M743 340l-3 4M748 339l3 2M727 361l-3 4M717 367l-3 4M710 393l-2 3M713 385l-2 3M683 426l3 2M678 429l-4 5M675 427l5 3M674 443l-2 3M663 447l-4 6M658 460l4 2M636 489l4 3M637 495l3 2M637 491l-2 3M639 496l3 2M588 549l7 5M589 559l-2 3M578 577l-2 3M569 591l-2 3M549 607l-5 8M536 624l8 5M538 621l7 5M878 182l3 2M848 206l9 6M857 197l6 4M802 281l-4 6M792 293l-3 5M800 290l4 3M805 290l-2 3M773 327l3 2M745 370l-2 3M735 368l9 7M729 395l-2 3M709 403l9 6M716 408l-3 4M711 401l6 4M718 406l-2 3M713 414l3 2M701 431l4 3M692 446l3 2M680 449l4 3M679 469l-2 3M670 471l-4 5M676 467l-3 4M663 468l-4 5M661 476l-3 4M653 483l11 8M642 501l-3 5M625 533l-4 6M634 533l3 2M616 536l7 5M600 578l3 2M582 609l-2 3M576 596l-5 7M559 639l3 2M551 633l-3 5M545 638l-6 9M834 259l7 5M840 249l5 4M825 292l3 2M806 305l5 3M802 305l3 2M734 406l-2 3M704 455l-4 5M703 444l10 7M699 472l3 2M702 461l3 2M690 479l-2 3M688 475l5 4M689 477l3 2M680 497l3 2M655 525l-3 5M657 529l-2 3M648 533l-4 5M642 540l-4 6M619 581l3 2M587 628l3 2M587 624l-2 4M569 647l4 3M576 645l-2 3M575 644l3 2M572 650l-2 3M569 638l-4 6M826 305l-4 6M822 308l-3 5M810 338l4 3M799 355l3 2M794 359l-3 4M793 351l-5 8M750 412l-5 7M751 414l4 3M729 438l-7 11M714 480l3 2M711 470l7 5M708 472l8 6M694 493l-3 5M696 490l-3 4M697 486l10 7M690 499l-6 8M690 510l3 2M676 521l-4 6M682 516l4 3M666 539l5 4M667 528l9 6M672 540l3 2M657 542l7 5M653 550l10 7M666 552l-2 3M657 541l-4 5M665 544l4 3M647 560l-3 4M648 565l-3 5M645 569l-4 5M641 576l-3 5M636 577l7 5M627 589l-6 8M627 587l-5 7M633 598l3 2M614 603l6 4M624 606l3 2M597 642l-3 4M582 656l-3 4M586 650l5 4M784 409l-2 3M780 419l-2 3M766 425l-4 6M768 435l3 2M773 421l4 3M746 450l-4 5M738 466l-5 7M732 489l-2 3M719 505l-2 3M700 525l5 3M696 525l-3 5M697 532l3 2M700 529l3 2M678 543l3 2M671 560l6 4M667 575l3 2M661 573l-2 3M630 624l-4 5M634 620l-3 4M621 639l4 3M622 641l3 2M623 641l3 2M610 646l-3 5M743 503l-2 3M736 496l-4 5M748 497l-2 3M724 512l-3 5M728 511l-3 4M695 559l4 3M693 558l8 5M702 551l-3 4M685 564l4 3M692 563l-3 5M679 590l3 2M672 593l-4 6M656 618l4 3M656 618l4 3M651 627l4 3M631 641l-6 8M625 649l5 3M723 551l-4 6M725 558l3 2M726 552l4 3M695 581l-4 6M692 594l7 5M695 602l-2 3M671 618l5 4M652 646l-5 7M653 647l4 3M643 676l3 2M637 662l-6 9M678 656l-2 3M666 662l-3 4M669 663l3 2M665 660l4 2M710 626l-5 8M698 646l-3 4M701 637l6 4M702 648l3 2M681 669l-3 4M680 681l4 3"/><path fill="#fff" fill-opacity="0.35" d="M575 538l3 -1 2 5 -3 1zM577 548l4 -2 2 6 -4 2zM579 576l2 -1 1 4 -2 1zM595 572l3 -1 2 5 -3 1zM616 644l5 -2 2 5 -5 2zM621 562l2 -1 2 5 -2 1zM627 636l4 -1 1 4 -4 1zM624 501l3 -1 2 4 -3 1zM640 542l2 -1 1 3 -2 1zM671 636l2 -1 1 3 -2 1zM673 629l4 -1 2 6 -4 1zM604 407l4 -1 2 6 -4 1zM632 425l2 -1 1 4 -2 1zM663 524l3 -1 1 3 -3 1zM621 358l3 -1 1 3 -3 1zM624 351l2 -1 2 4 -2 1zM663 454l3 -1 1 3 -3 1zM658 447l4 -2 2 5 -4 2zM706 548l4 -1 1 4 -4 1zM730 662l5 -2 1 4 -5 2zM680 390l3 -1 2 4 -3 1zM662 393l4 -1 2 5 -4 1zM661 399l4 -1 1 4 -4 1zM662 389l3 -1 1 4 -3 1zM700 461l3 -1 2 5 -3 1zM692 472l3 -1 1 3 -3 1zM712 436l3 -1 1 4 -3 1zM714 424l4 -1 2 4 -4 1zM748 534l4 -1 2 4 -4 1zM714 344l5 -2 1 3 -5 2zM736 401l2 -1 1 4 -2 1zM767 470l2 -1 1 3 -2 1z"/><path fill="#fff" fill-opacity="0.6" d="M565 630l5 -2 2 5 -5 2zM586 636l3 -1 1 2 -3 1zM617 651l3 -1 2 6 -3 1zM603 487l5 -2 2 5 -5 2zM622 492l4 -2 1 3 -4 2zM648 555l4 -1 2 4 -4 1zM633 558l3 -1 1 4 -3 1zM663 604l2 -1 2 4 -2 1zM653 617l4 -2 1 3 -4 2zM651 602l4 -1 1 3 -4 1zM668 651l2 -1 2 4 -2 1zM622 406l2 -1 2 4 -2 1zM623 416l4 -2 1 2 -4 2zM616 421l2 -1 1 4 -2 1zM618 448l4 -1 1 3 -4 1zM656 506l3 -1 2 4 -3 1zM708 638l4 -1 1 4 -4 1zM710 645l3 -1 2 6 -3 1zM620 348l2 -1 2 4 -2 1zM620 349l4 -2 1 2 -4 2zM610 343l4 -2 1 4 -4 2zM639 371l2 -1 1 3 -2 1zM691 526l2 -1 1 4 -2 1zM675 414l3 -1 1 4 -3 1zM671 427l4 -2 2 4 -4 2zM718 416l5 -2 1 2 -5 2zM738 407l3 -1 2 5 -3 1zM757 470l4 -2 1 3 -4 2zM748 398l3 -1 1 4 -3 1zM753 394l3 -1 1 3 -3 1zM748 388l4 -1 2 4 -4 1zM754 380l3 -1 1 2 -3 1z"/><path fill="#fff" fill-opacity="0.9" d="M582 627l4 -1 1 3 -4 1zM576 625l4 -1 2 5 -4 1zM576 567l3 -1 2 4 -3 1zM585 571l3 -1 1 2 -3 1zM588 569l5 -2 1 2 -5 2zM603 569l2 -1 1 4 -2 1zM648 637l3 -1 1 3 -3 1zM614 463l3 -1 1 2 -3 1zM630 549l4 -1 1 4 -4 1zM654 597l3 -1 2 5 -3 1zM677 665l4 -1 2 6 -4 1zM619 422l2 -1 2 5 -2 1zM632 440l2 -1 2 5 -2 1zM645 520l5 -2 1 2 -5 2zM630 335l4 -1 1 4 -4 1zM629 367l2 -1 1 3 -2 1zM702 540l4 -1 1 2 -4 1zM699 555l2 -1 1 2 -2 1zM709 560l3 -1 1 4 -3 1zM732 666l4 -1 1 3 -4 1zM659 387l3 -1 1 2 -3 1zM692 475l4 -2 2 5 -4 2zM722 521l4 -1 2 6 -4 1zM723 436l3 -1 1 4 -3 1zM741 509l4 -1 1 4 -4 1zM748 521l3 -1 2 5 -3 1zM750 551l4 -2 1 3 -4 2zM702 341l3 -1 1 4 -3 1zM733 340l2 -1 2 4 -2 1zM734 340l3 -1 1 4 -3 1zM744 330l2 -1 2 5 -2 1zM747 384l2 -1 1 2 -2 1zM753 400l5 -2 2 5 -5 2z"/><path fill="none" stroke="#fff" stroke-width="1.4" stroke-opacity="0.5" d="M576 539l5 -2M582 578l2 6M580 571l2 5M621 643l4 -1M602 562l5 13M644 647l6 -2M606 465l7 -3M612 504l7 -3M611 499l10 -4M612 505l5 -2M612 507l9 -3M610 505l18 -6M634 560l12 -5M630 558l6 -2M663 596l1 4M672 637l4 -2M678 631l4 -1M667 652l6 15M606 404l7 -2M632 429l4 -1M646 518l6 -2M647 525l4 10M658 510l2 5M700 638l2 5M693 644l13 -5M620 353l2 5M629 385l1 4M688 546l6 16M703 538l1 4M742 666l6 -2M751 668l4 -1M678 391l1 4M676 423l3 10M670 422l5 13M680 409l2 5M687 464l8 -3M689 466l15 -6M702 478l2 5M696 490l4 -1M694 493l18 -7M722 523l6 -2M698 372l1 4M695 393l8 -3M711 414l2 5M710 433l6 -2M735 525l21 -7M759 534l4 -1M757 530l4 -1M732 390l2 7M765 469l1 4M734 344l4 12M730 345l5 15M746 389l1 4"/><path fill="none" stroke="#fff" stroke-width="1.4" stroke-opacity="0.85" d="M584 630l1 4M578 577l8 -3M609 652l5 -2M616 649l2 4M618 639l1 4M605 568l6 15M634 652l19 -7M614 493l2 6M632 557l5 14M631 544l9 -3M675 638l5 -2M678 636l4 -1M686 653l1 4M613 407l2 7M630 418l1 4M632 447l2 6M620 350l13 -5M629 383l6 15M650 448l18 -7M710 560l4 -1M735 665l4 12M666 400l11 -4M688 466l5 12M693 476l15 -6M710 501l3 7M727 523l1 4M683 382l1 4M694 388l4 12M696 407l7 -2M705 433l6 16M716 427l2 5M718 433l5 -2M753 534l2 4M709 353l4 12M726 393l6 -2M737 395l4 -1M728 411l2 5M756 488l5 14M731 333l5 -2M738 342l5 -2M742 331l4 -1"/></g>
<path fill="#fff" fill-opacity="0.35" d="M949 158l3 1 -1 3 -3 -1zM947 154l3 1 -1 6 -3 -1zM955 192l3 0 -1 5 -3 -0zM953 228l4 1 -1 4 -4 -1zM971 176l4 1 -1 6 -4 -1zM984 223l4 1 -1 5 -4 -1zM1003 172l4 1 -1 5 -4 -1zM1010 210l3 0 -1 3 -3 -0zM1010 245l2 0 -0 2 -2 -0zM1010 241l3 1 -1 3 -3 -1z"/><path fill="#fff" fill-opacity="0.6" d="M959 199l4 1 -0 2 -4 -1zM970 178l4 1 -1 4 -4 -1zM979 180l4 1 -1 5 -4 -1zM971 177l3 1 -0 2 -3 -1zM969 204l4 1 -1 3 -4 -1zM992 179l4 1 -1 3 -4 -1zM980 223l2 0 -1 6 -2 -0zM975 229l3 1 -1 3 -3 -1zM1012 211l2 0 -1 6 -2 -0zM1005 240l3 1 -1 3 -3 -1z"/><path fill="#fff" fill-opacity="0.9" d="M951 160l2 0 -0 2 -2 -0zM966 166l3 1 -1 3 -3 -1zM957 192l3 1 -1 3 -3 -1zM973 205l3 1 -1 4 -3 -1zM993 184l2 0 -1 4 -2 -0zM978 219l4 1 -1 3 -4 -1zM985 232l4 1 -1 4 -4 -1zM1013 209l5 1 -1 6 -5 -1zM1007 212l4 1 -1 5 -4 -1z"/><path fill="none" stroke="#fff" stroke-width="1.4" stroke-opacity="0.5" d="M954 156l-1 4M948 155l4 1M964 177l-1 4M964 172l-1 4M962 174l-1 5M958 177l-1 5M963 172l5 1M960 187l5 1M960 189l5 1M959 182l4 1M960 184l-1 4M965 187l-1 4M957 202l-1 4M952 235l-1 4M950 225l7 1M947 231l-2 9M977 150l-1 7M987 149l-1 4M980 151l5 1M973 180l-1 6M971 210l-1 4M984 196l7 1M993 192l-1 4M981 224l4 1M980 220l-1 4M987 218l4 1M975 231l-2 8M1007 172l4 1M1001 170l-1 6M1014 215l4 1M1010 208l7 1M1014 218l4 1M1012 218l-1 5M1002 243l8 2M1000 242l-1 5M1005 240l-1 5M1011 240l-1 4"/><path fill="none" stroke="#fff" stroke-width="1.4" stroke-opacity="0.85" d="M956 153l-1 4M946 157l-1 6M948 161l4 1M970 162l4 1M960 162l8 2M966 163l-1 4M967 174l-1 4M962 175l-1 5M959 190l-1 5M955 202l5 1M958 207l-1 4M956 207l4 1M960 208l-1 4M948 234l-1 7M955 229l4 1M983 145l-1 4M981 147l4 1M976 172l4 1M974 182l-1 5M974 174l-1 6M974 205l-1 4M996 168l-1 4M992 164l5 1M997 168l4 1M990 183l4 1M981 194l10 2M986 189l5 1M982 240l-1 4M984 234l4 1M1006 170l-1 5M1013 226l4 1M1013 224l-1 4M1008 224l6 1M1009 229l4 1M1002 237l-2 10"/>
<path fill="#fff" fill-opacity="0.35" d="M1074 201l4 1 -1 6 -4 -1zM1075 196l4 1 -1 5 -4 -1z"/><path fill="#fff" fill-opacity="0.6" d="M1055 170l4 1 -0 2 -4 -1zM1054 170l4 1 -1 3 -4 -1zM1050 185l4 1 -1 3 -4 -1zM1077 192l3 1 -1 5 -3 -1zM1076 191l3 1 -1 3 -3 -1z"/><path fill="#fff" fill-opacity="0.9" d="M1055 166l4 1 -1 4 -4 -1zM1058 164l5 1 -1 3 -5 -1zM1053 168l2 0 -1 5 -2 -0zM1048 167l3 1 -1 4 -3 -1zM1054 184l5 1 -1 4 -5 -1zM1080 192l4 1 -1 4 -4 -1zM1084 186l5 1 -1 6 -5 -1zM1074 189l2 0 -1 4 -2 -0zM1080 205l3 1 -1 5 -3 -1z"/><path fill="none" stroke="#fff" stroke-width="1.4" stroke-opacity="0.5" d="M1049 176l7 1M1080 190l4 1M1079 202l-1 4M1077 205l-1 4"/><path fill="none" stroke="#fff" stroke-width="1.4" stroke-opacity="0.85" d="M1057 171l-1 4M1050 180l-1 6M1048 181l-1 5M1078 191l-1 5M1074 191l6 1M1077 205l4 1M1071 205l-1 4M1072 195l7 1"/>
<path fill="#fff" fill-opacity="0.35" d="M917 274l5 1 -0 2 -5 -1zM940 293l3 1 -1 3 -3 -1zM940 294l4 1 -0 2 -4 -1z"/><path fill="#fff" fill-opacity="0.6" d="M925 284l4 1 -1 5 -4 -1zM920 290l5 1 -1 3 -5 -1zM936 271l3 1 -1 6 -3 -1zM938 288l3 1 -1 5 -3 -1z"/><path fill="#fff" fill-opacity="0.9" d="M909 276l4 1 -1 5 -4 -1zM916 270l2 0 -1 3 -2 -0zM906 275l3 1 -1 5 -3 -1zM913 277l5 1 -1 5 -5 -1zM922 285l4 1 -1 6 -4 -1zM934 296l3 1 -1 5 -3 -1zM935 286l4 1 -1 4 -4 -1zM941 294l3 1 -1 3 -3 -1z"/><path fill="none" stroke="#fff" stroke-width="1.4" stroke-opacity="0.5" d="M916 274l4 1M924 288l4 1M942 280l4 1M938 274l-1 5M932 287l-2 8"/><path fill="none" stroke="#fff" stroke-width="1.4" stroke-opacity="0.85" d="M912 267l-1 5M926 284l-1 4M919 284l5 1M940 283l4 1M938 282l5 1M933 280l7 1M931 291l9 2"/>
<path fill="#fff" fill-opacity="0.35" d="M826 578l3 1 -0 2 -3 -1zM825 597l5 1 -1 5 -5 -1zM850 558l3 1 -1 4 -3 -1zM846 563l5 1 -0 3 -5 -1zM844 592l2 0 -1 4 -2 -0zM838 607l3 1 -1 3 -3 -1zM840 602l2 0 -1 3 -2 -0zM839 601l3 1 -1 3 -3 -1zM837 609l5 1 -1 3 -5 -1zM829 649l3 1 -1 5 -3 -1zM858 593l2 0 -1 5 -2 -0zM871 576l4 1 -0 2 -4 -1zM877 612l3 1 -1 4 -3 -1zM876 645l4 1 -1 5 -4 -1z"/><path fill="#fff" fill-opacity="0.6" d="M829 572l4 1 -1 5 -4 -1zM836 578l3 1 -0 2 -3 -1zM851 559l5 1 -1 5 -5 -1zM846 593l3 1 -1 6 -3 -1zM835 622l3 1 -1 4 -3 -1zM835 614l3 1 -0 2 -3 -1zM832 635l3 1 -0 2 -3 -1zM838 638l3 1 -1 3 -3 -1zM855 605l3 1 -1 4 -3 -1zM855 619l3 1 -0 2 -3 -1zM882 565l5 1 -1 6 -5 -1zM867 611l2 0 -0 2 -2 -0zM881 630l5 1 -1 5 -5 -1z"/><path fill="#fff" fill-opacity="0.9" d="M831 578l3 1 -1 3 -3 -1zM824 598l4 1 -1 5 -4 -1zM826 605l3 1 -0 3 -3 -1zM845 560l4 1 -1 4 -4 -1zM840 623l3 1 -1 4 -3 -1zM832 621l3 1 -1 3 -3 -1zM834 636l3 1 -1 3 -3 -1zM853 590l2 0 -1 3 -2 -0zM853 595l2 0 -1 5 -2 -0zM854 620l5 1 -1 5 -5 -1zM844 651l5 1 -1 6 -5 -1zM872 570l2 0 -1 3 -2 -0zM880 567l3 1 -1 3 -3 -1zM875 579l3 1 -0 2 -3 -1zM862 611l3 1 -1 5 -3 -1zM879 630l3 1 -1 3 -3 -1zM875 643l3 1 -1 3 -3 -1z"/><path fill="none" stroke="#fff" stroke-width="1.4" stroke-opacity="0.5" d="M829 572l-1 7M830 574l4 1M831 574l5 1M822 596l-2 9M826 598l6 1M825 601l4 1M846 561l-1 5M844 565l8 2M837 590l6 1M836 605l6 1M840 603l5 1M854 611l4 1M846 623l8 2M849 650l4 1M850 649l-1 4M875 569l4 1M873 567l-1 5M871 580l7 1M872 584l6 1M870 583l6 1M868 609l-1 4M869 610l4 1M858 639l-1 6M857 634l-2 11M877 616l-2 8M885 619l4 1M877 623l-1 7M875 625l4 1M875 631l-1 5M881 632l-1 4M876 626l-1 6M878 643l4 1M875 635l7 1M871 639l-2 9"/><path fill="none" stroke="#fff" stroke-width="1.4" stroke-opacity="0.85" d="M833 578l-1 4M825 597l6 1M822 602l8 2M843 593l-1 4M837 614l4 1M832 622l5 1M836 620l5 1M838 623l-1 4M834 637l-1 4M837 630l-1 4M838 635l-1 4M838 630l-1 4M839 631l4 1M835 649l4 1M827 644l-2 9M835 641l4 1M856 612l4 1M848 618l-1 5M844 645l-1 7M871 571l-2 8M873 573l-1 5M872 587l-1 5M872 579l5 1M860 634l-1 7M882 612l-1 4M880 636l-1 4M871 642l-1 7M881 638l4 1"/>
<path fill="#fff" fill-opacity="0.35" d="M847 465l4 1 -1 6 -4 -1zM863 489l2 0 -1 4 -2 -0zM880 488l4 1 -0 3 -4 -1zM878 508l4 1 -1 4 -4 -1zM873 503l5 1 -1 4 -5 -1zM894 483l3 0 -1 3 -3 -0zM892 478l2 0 -1 3 -2 -0zM890 488l5 1 -0 2 -5 -1zM887 509l5 1 -0 2 -5 -1zM884 504l5 1 -1 4 -5 -1zM885 500l2 0 -1 4 -2 -0zM887 510l4 1 -1 3 -4 -1z"/><path fill="#fff" fill-opacity="0.6" d="M818 475l2 0 -1 4 -2 -0zM843 481l5 1 -1 6 -5 -1zM846 478l3 1 -1 3 -3 -1zM849 500l4 1 -1 3 -4 -1zM861 467l4 1 -1 4 -4 -1zM864 470l4 1 -1 3 -4 -1zM861 504l4 1 -1 3 -4 -1zM879 476l5 1 -1 4 -5 -1zM878 488l3 1 -1 3 -3 -1zM871 491l4 1 -1 5 -4 -1zM888 473l3 1 -1 4 -3 -1zM884 496l3 1 -1 6 -3 -1zM891 496l2 0 -1 6 -2 -0zM887 511l4 1 -1 4 -4 -1z"/><path fill="#fff" fill-opacity="0.9" d="M820 479l4 1 -1 5 -4 -1zM815 477l4 1 -1 5 -4 -1zM835 469l4 1 -1 6 -4 -1zM834 469l4 1 -1 4 -4 -1zM836 470l4 1 -1 5 -4 -1zM841 464l2 0 -1 4 -2 -0zM834 482l5 1 -1 6 -5 -1zM832 481l3 1 -1 3 -3 -1zM845 472l2 0 -1 5 -2 -0zM848 482l2 0 -1 5 -2 -0zM844 498l3 1 -0 2 -3 -1zM858 486l2 0 -1 3 -2 -0zM864 492l4 1 -1 4 -4 -1zM861 489l3 1 -1 5 -3 -1zM861 496l4 1 -1 6 -4 -1zM859 499l4 1 -1 4 -4 -1zM876 477l4 1 -1 6 -4 -1zM879 475l5 1 -1 4 -5 -1zM878 489l3 1 -1 5 -3 -1zM871 497l5 1 -0 2 -5 -1zM872 500l2 0 -1 4 -2 -0zM889 481l3 1 -1 6 -3 -1zM891 511l2 0 -0 2 -2 -0z"/><path fill="none" stroke="#fff" stroke-width="1.4" stroke-opacity="0.5" d="M819 478l-1 4M820 477l-1 6M833 484l-1 5M838 477l4 1M831 481l5 1M838 477l4 1M831 485l-1 6M850 475l-1 5M849 467l7 1M851 487l-1 4M840 501l4 1M847 502l-1 4M867 487l4 1M863 490l4 1M862 501l4 1M878 470l-1 5M880 485l-1 4M878 499l4 1M869 504l-1 8M895 473l-1 4M888 481l-1 4"/><path fill="none" stroke="#fff" stroke-width="1.4" stroke-opacity="0.85" d="M825 480l-1 4M819 484l-1 5M842 467l4 1M839 465l4 1M834 466l-1 5M836 476l4 1M849 479l4 1M844 480l-1 7M844 485l4 1M847 486l5 1M844 495l-1 4M860 471l8 2M866 477l-1 4M863 483l4 1M878 470l6 1M872 501l-1 5M896 480l4 1M888 494l5 1M891 494l-1 4M885 489l9 2M889 511l-1 4"/>
<path fill="#fff" fill-opacity="0.35" d="M1117 373l3 1 -1 6 -3 -1zM1132 329l3 1 -1 3 -3 -1zM1136 356l3 1 -1 4 -3 -1zM1134 358l4 1 -1 3 -4 -1zM1140 380l4 1 -0 2 -4 -1zM1142 392l3 1 -1 4 -3 -1z"/><path fill="#fff" fill-opacity="0.6" d="M1089 385l4 1 -1 5 -4 -1zM1111 372l3 1 -0 2 -3 -1zM1138 333l4 1 -1 4 -4 -1zM1144 393l4 1 -1 5 -4 -1z"/><path fill="#fff" fill-opacity="0.9" d="M1082 366l4 1 -1 4 -4 -1zM1088 381l3 1 -1 5 -3 -1zM1111 372l3 1 -1 4 -3 -1zM1112 371l2 0 -0 2 -2 -0zM1138 389l2 0 -1 4 -2 -0z"/><path fill="none" stroke="#fff" stroke-width="1.4" stroke-opacity="0.5" d="M1085 366l-1 6M1081 377l-1 8M1112 324l4 1M1117 374l-1 4M1118 376l4 1M1112 370l-2 8M1137 332l4 1M1130 358l-1 5M1141 381l-1 5M1141 390l-1 4M1141 394l4 1M1140 390l-1 5"/><path fill="none" stroke="#fff" stroke-width="1.4" stroke-opacity="0.85" d="M1085 370l-1 4M1087 368l5 1M1088 384l4 1M1087 381l-1 4M1104 331l4 1M1115 325l4 1M1107 329l-1 7M1114 332l-1 4M1114 369l6 1M1140 330l4 1M1140 329l4 1M1131 332l6 1M1145 376l4 1M1140 375l-2 8M1146 380l-1 4M1141 395l-1 4M1138 394l4 1"/>
<path fill="#fff" fill-opacity="0.35" d="M1005 620l4 1 -1 5 -4 -1zM994 622l4 1 -0 2 -4 -1zM1022 559l4 1 -1 4 -4 -1zM1020 557l4 1 -1 5 -4 -1zM1024 617l4 1 -1 6 -4 -1zM1045 579l4 1 -1 3 -4 -1zM1052 591l5 1 -1 5 -5 -1zM1042 606l2 0 -1 5 -2 -0zM1038 648l4 1 -1 3 -4 -1z"/><path fill="#fff" fill-opacity="0.6" d="M1028 570l2 0 -1 4 -2 -0zM1034 610l4 1 -1 6 -4 -1zM1047 598l3 1 -1 5 -3 -1zM1035 648l3 1 -1 4 -3 -1z"/><path fill="#fff" fill-opacity="0.9" d="M1008 568l3 1 -0 2 -3 -1zM996 621l2 0 -1 5 -2 -0zM997 617l4 1 -1 3 -4 -1zM1024 569l3 1 -1 3 -3 -1zM1034 614l4 1 -1 5 -4 -1zM1032 610l4 1 -1 4 -4 -1zM1056 535l4 1 -1 6 -4 -1zM1063 536l4 1 -1 3 -4 -1zM1064 533l3 1 -1 6 -3 -1zM1050 581l3 1 -1 4 -3 -1zM1048 579l4 1 -1 5 -4 -1zM1049 604l3 1 -1 5 -3 -1zM1042 599l3 0 -0 2 -3 -0zM1044 606l3 1 -1 4 -3 -1zM1036 647l3 1 -1 4 -3 -1z"/><path fill="none" stroke="#fff" stroke-width="1.4" stroke-opacity="0.5" d="M1009 566l-1 6M1013 568l-1 4M1029 561l-1 4M1024 552l6 1M1021 574l6 1M1022 572l-1 5M1027 615l6 1M1059 535l-1 5M1054 582l4 1M1052 588l-1 4M1051 594l-1 4M1049 588l-1 4M1051 595l-1 4M1045 599l5 1M1044 605l-1 5"/><path fill="none" stroke="#fff" stroke-width="1.4" stroke-opacity="0.85" d="M1002 621l-1 4M1005 618l-1 4M1004 618l4 1M1029 554l4 1M1028 562l4 1M1019 575l-1 7M1020 575l6 1M1026 569l-1 4M1034 615l-1 4M1032 610l4 1M1048 577l-1 6M1053 571l-1 4M1052 571l-1 5M1052 585l-1 4M1047 594l6 1M1043 588l10 2M1044 605l-1 5"/>
<path fill="#fff" fill-opacity="0.35" d="M834 478l4 1 -1 4 -4 -1zM840 477l3 1 -1 5 -3 -1zM862 399l4 1 -1 3 -4 -1zM867 408l5 1 -1 6 -5 -1zM861 430l3 1 -0 2 -3 -1zM866 427l4 1 -1 4 -4 -1zM857 439l3 1 -0 2 -3 -1zM853 453l3 1 -1 4 -3 -1zM856 457l4 1 -1 4 -4 -1zM853 463l2 0 -1 3 -2 -0zM848 478l5 1 -1 3 -5 -1zM897 325l2 0 -1 5 -2 -0zM892 321l3 1 -1 5 -3 -1zM894 357l3 1 -1 6 -3 -1zM892 358l2 0 -1 3 -2 -0zM884 376l3 1 -1 5 -3 -1zM887 387l4 1 -1 5 -4 -1zM886 388l4 1 -1 5 -4 -1zM922 270l2 0 -1 3 -2 -0zM922 263l3 1 -1 5 -3 -1zM912 297l3 0 -1 3 -3 -0zM916 310l2 0 -1 3 -2 -0zM909 306l3 1 -1 5 -3 -1zM904 326l4 1 -1 4 -4 -1zM906 332l3 1 -0 2 -3 -1zM902 347l3 1 -1 3 -3 -1zM900 353l3 1 -1 5 -3 -1zM939 274l3 1 -1 4 -3 -1z"/><path fill="#fff" fill-opacity="0.6" d="M839 469l3 1 -1 4 -3 -1zM845 467l4 1 -1 5 -4 -1zM841 483l2 0 -1 4 -2 -0zM870 404l4 1 -1 5 -4 -1zM868 417l4 1 -1 6 -4 -1zM865 415l4 1 -1 4 -4 -1zM858 423l3 1 -1 4 -3 -1zM855 453l2 0 -0 3 -2 -0zM849 478l5 1 -1 6 -5 -1zM854 480l2 0 -1 4 -2 -0zM851 480l4 1 -1 3 -4 -1zM894 344l4 1 -1 4 -4 -1zM878 400l4 1 -1 4 -4 -1zM882 404l4 1 -1 4 -4 -1zM875 415l3 1 -1 5 -3 -1zM876 430l4 1 -0 2 -4 -1zM925 268l5 1 -1 4 -5 -1zM923 281l3 1 -1 5 -3 -1zM918 278l3 1 -1 4 -3 -1zM921 293l5 1 -1 3 -5 -1zM919 289l2 0 -1 5 -2 -0zM910 308l2 0 -1 3 -2 -0zM910 322l4 1 -1 4 -4 -1zM906 346l2 0 -0 2 -2 -0zM898 362l2 0 -1 6 -2 -0zM931 264l4 1 -1 4 -4 -1zM930 271l2 0 -1 4 -2 -0z"/><path fill="#fff" fill-opacity="0.9" d="M873 398l5 1 -1 4 -5 -1zM863 396l4 1 -1 5 -4 -1zM862 423l4 1 -1 4 -4 -1zM853 443l3 1 -1 3 -3 -1zM860 446l3 1 -1 3 -3 -1zM856 442l4 1 -1 5 -4 -1zM854 458l3 1 -0 2 -3 -1zM894 323l3 1 -1 5 -3 -1zM881 371l5 1 -1 6 -5 -1zM887 385l5 1 -1 5 -5 -1zM886 385l4 1 -1 5 -4 -1zM884 398l3 1 -1 5 -3 -1zM882 419l3 1 -1 6 -3 -1zM875 412l4 1 -0 2 -4 -1zM919 267l4 1 -1 5 -4 -1zM926 265l4 1 -1 4 -4 -1zM915 284l2 0 -1 6 -2 -0zM920 284l3 1 -1 3 -3 -1zM910 313l3 1 -1 5 -3 -1zM904 349l4 1 -1 4 -4 -1zM930 287l2 0 -1 4 -2 -0z"/><path fill="none" stroke="#fff" stroke-width="1.4" stroke-opacity="0.5" d="M833 468l-1 4M836 468l-2 8M869 396l-1 4M865 417l4 1M869 416l-1 4M861 411l-1 7M853 444l-1 6M856 440l-1 7M855 467l4 1M894 318l6 1M895 316l-1 4M900 314l-1 4M900 332l-1 4M892 335l6 1M889 334l-2 9M887 343l-2 8M886 344l-2 9M895 344l4 1M894 358l-1 4M888 356l5 1M884 364l-1 4M889 357l-1 6M881 373l4 1M880 387l7 1M881 384l7 1M882 402l-1 4M875 401l-1 7M872 426l-2 9M875 429l5 1M923 266l-1 4M919 297l-1 4M913 305l5 1M917 307l-1 4M910 320l-1 5M915 321l4 1M910 327l-1 5M911 325l4 1M909 347l-1 4M905 363l4 1M934 274l-1 5M929 283l-1 7"/><path fill="none" stroke="#fff" stroke-width="1.4" stroke-opacity="0.85" d="M838 463l7 1M837 476l4 1M842 484l4 1M841 476l4 1M870 396l4 1M869 412l-1 4M866 409l-1 4M863 425l-1 4M859 421l7 1M862 430l4 1M859 457l-1 4M850 472l-1 5M851 470l-1 5M853 484l4 1M853 487l4 1M854 482l4 1M893 316l-1 7M894 328l-1 5M895 337l-1 4M898 333l4 1M899 329l4 1M893 336l-1 5M888 356l-1 6M892 360l-1 4M882 370l5 1M883 373l-1 5M872 428l-1 5M873 424l-1 8M879 429l4 1M878 434l4 1M919 261l5 1M917 264l9 2M916 283l-1 5M916 292l5 1M911 326l-1 4M911 341l-1 4M908 332l-1 5M905 332l5 1M907 368l4 1M938 269l-1 4M938 274l-1 4M934 274l5 1M929 287l-1 6"/>
<path fill="#fff" fill-opacity="0.35" d="M878 347l5 1 -0 2 -5 -1zM872 352l4 1 -1 6 -4 -1zM885 407l4 1 -1 5 -4 -1zM881 403l4 1 -1 4 -4 -1zM902 354l4 1 -1 6 -4 -1zM893 399l2 0 -1 4 -2 -0zM889 412l4 1 -1 4 -4 -1zM894 413l2 0 -1 5 -2 -0zM915 385l3 1 -1 5 -3 -1zM911 379l3 1 -1 4 -3 -1z"/><path fill="#fff" fill-opacity="0.6" d="M894 349l3 1 -1 4 -3 -1zM891 348l4 1 -0 2 -4 -1zM876 400l4 1 -0 2 -4 -1zM903 384l4 1 -1 6 -4 -1zM898 382l3 1 -1 5 -3 -1zM901 398l3 1 -1 5 -3 -1zM894 407l3 1 -1 3 -3 -1zM912 379l3 1 -0 2 -3 -1zM902 416l4 1 -0 2 -4 -1zM930 356l4 1 -0 3 -4 -1z"/><path fill="#fff" fill-opacity="0.9" d="M874 348l5 1 -0 2 -5 -1zM886 348l4 1 -1 5 -4 -1zM887 356l2 0 -1 4 -2 -0zM902 358l2 0 -0 2 -2 -0zM895 385l3 1 -1 5 -3 -1zM894 389l3 1 -1 4 -3 -1zM891 405l3 1 -1 3 -3 -1zM911 385l4 1 -1 3 -4 -1zM938 358l4 1 -1 5 -4 -1z"/><path fill="none" stroke="#fff" stroke-width="1.4" stroke-opacity="0.5" d="M878 346l-1 5M868 407l-1 4M865 399l4 1M896 347l4 1M882 411l-1 4M884 409l4 1M883 411l-1 4M894 383l-2 10M903 387l4 1M900 396l-1 4M899 407l-1 4M915 387l4 1M913 379l-1 4M910 383l-2 8M913 412l4 1M905 416l7 1M931 355l-1 4M931 361l5 1M938 356l4 1M929 356l-1 7"/><path fill="none" stroke="#fff" stroke-width="1.4" stroke-opacity="0.85" d="M873 345l-1 7M880 350l4 1M865 400l6 1M867 400l-1 5M895 356l-1 4M883 404l-1 4M903 354l4 1M898 381l5 1M901 383l4 1M903 378l-1 4M898 412l4 1M916 382l-1 4M905 408l-2 9"/>
<g fill="none" stroke="#1e1e1e" stroke-opacity=".28" stroke-width="3"><polyline points="597,377 667,506 700,560"/><polyline points="590,250 700,300 790,340"/><polyline points="660,90 620,200 575,330"/><polyline points="560,560 650,600 720,640"/></g>
<g fill="none" stroke="#fff" stroke-linejoin="round">
<polyline points="893,126 879,160 863,196 810,340 760,433 722,556 700,640" stroke-opacity="0.3" stroke-width="1.2" stroke-dasharray="7 2 3 1.5"/>
<polyline points="1091,276 1180,309 1141,413 1147,435 1032,669 995,650 1091,276" stroke-opacity="0.5" stroke-width="1.2" stroke-dasharray="7 2 3 1.5"/>
<polyline points="1229,319 1161,440 1037,741" stroke-opacity="0.55" stroke-width="1.2" stroke-dasharray="7 2 3 1.5"/>
<polyline points="1246,300 1129,540 1046,738" stroke-opacity="0.45" stroke-width="1.0" stroke-dasharray="7 2 3 1.5"/>
<polyline points="1097,540 1020,738" stroke-opacity="0.4" stroke-width="1.0" stroke-dasharray="7 2 3 1.5"/>
<polyline points="1055,316 1000,457 957,556 898,716 880,762" stroke-opacity="0.45" stroke-width="1.1" stroke-dasharray="7 2 3 1.5"/>
<polyline points="1074,316 1025,457 973,556 909,716" stroke-opacity="0.4" stroke-width="1.0" stroke-dasharray="7 2 3 1.5"/>
<polyline points="877,561 845,638" stroke-opacity="0.8" stroke-width="2.5" stroke-dasharray="7 2 3 1.5"/>
<polyline points="1046,220 1233,291" stroke-opacity="0.4" stroke-width="1.0" stroke-dasharray="7 2 3 1.5"/>
<polyline points="1000,200 1100,240 1184,316" stroke-opacity="0.35" stroke-width="1.0" stroke-dasharray="7 2 3 1.5"/>
<polyline points="1178,569 1106,700" stroke-opacity="0.4" stroke-width="1.0" stroke-dasharray="7 2 3 1.5"/>
<polyline points="795,163 812,166 808,182 792,179 795,163" stroke-opacity="0.95" stroke-width="6" stroke-dasharray="7 2 3 1.5"/>
<polyline points="923,264 834,476" stroke-opacity="0.8" stroke-width="3" stroke-dasharray="7 2 3 1.5"/>
<polyline points="972,146 948,222" stroke-opacity="0.6" stroke-width="1.6" stroke-dasharray="7 2 3 1.5"/>
<polyline points="988,150 962,226" stroke-opacity="0.7" stroke-width="1.6" stroke-dasharray="7 2 3 1.5"/>
<polyline points="1003,153 978,229" stroke-opacity="0.6" stroke-width="1.6" stroke-dasharray="7 2 3 1.5"/>
<polyline points="1018,157 995,232" stroke-opacity="0.55" stroke-width="1.4" stroke-dasharray="7 2 3 1.5"/>
<polyline points="950,222 995,232" stroke-opacity="0.5" stroke-width="1.4" stroke-dasharray="7 2 3 1.5"/>
<polyline points="641,131 714,182 790,235" stroke-opacity="0.35" stroke-width="1.5" stroke-dasharray="7 2 3 1.5"/>
<polyline points="706,229 698,278 747,309 747,276 706,229" stroke-opacity="0.45" stroke-width="1.5" stroke-dasharray="7 2 3 1.5"/>
<polyline points="560,457 597,408 650,330" stroke-opacity="0.35" stroke-width="1.5" stroke-dasharray="7 2 3 1.5"/>
<polyline points="600,300 680,360 740,400" stroke-opacity="0.3" stroke-width="1.3" stroke-dasharray="7 2 3 1.5"/>
<polyline points="900,360 945,380" stroke-opacity="0.6" stroke-width="2" stroke-dasharray="7 2 3 1.5"/>
<polyline points="880,410 925,430" stroke-opacity="0.6" stroke-width="2" stroke-dasharray="7 2 3 1.5"/>
</g>
</g></svg>

<svg class="a" style="left:0;top:0" width="80" height="90"><g transform="translate(33.5,33.2)"><circle r="29" fill="#2e2e2e"/><rect x="-1.6" y="-32.5" width="3.2" height="6" fill="#6c6c6c" transform="rotate(0)"/><rect x="-1.6" y="-32.5" width="3.2" height="6" fill="#6c6c6c" transform="rotate(10)"/><rect x="-1.6" y="-32.5" width="3.2" height="6" fill="#6c6c6c" transform="rotate(20)"/><rect x="-1.6" y="-32.5" width="3.2" height="6" fill="#6c6c6c" transform="rotate(30)"/><rect x="-1.6" y="-32.5" width="3.2" height="6" fill="#6c6c6c" transform="rotate(40)"/><rect x="-1.6" y="-32.5" width="3.2" height="6" fill="#6c6c6c" transform="rotate(50)"/><rect x="-1.6" y="-32.5" width="3.2" height="6" fill="#6c6c6c" transform="rotate(60)"/><rect x="-1.6" y="-32.5" width="3.2" height="6" fill="#6c6c6c" transform="rotate(70)"/><rect x="-1.6" y="-32.5" width="3.2" height="6" fill="#6c6c6c" transform="rotate(80)"/><rect x="-1.6" y="-32.5" width="3.2" height="6" fill="#6c6c6c" transform="rotate(90)"/><rect x="-1.6" y="-32.5" width="3.2" height="6" fill="#6c6c6c" transform="rotate(100)"/><rect x="-1.6" y="-32.5" width="3.2" height="6" fill="#6c6c6c" transform="rotate(110)"/><rect x="-1.6" y="-32.5" width="3.2" height="6" fill="#6c6c6c" transform="rotate(120)"/><rect x="-1.6" y="-32.5" width="3.2" height="6" fill="#6c6c6c" transform="rotate(130)"/><rect x="-1.6" y="-32.5" width="3.2" height="6" fill="#6c6c6c" transform="rotate(140)"/><rect x="-1.6" y="-32.5" width="3.2" height="6" fill="#6c6c6c" transform="rotate(150)"/><rect x="-1.6" y="-32.5" width="3.2" height="6" fill="#6c6c6c" transform="rotate(160)"/><rect x="-1.6" y="-32.5" width="3.2" height="6" fill="#6c6c6c" transform="rotate(170)"/><rect x="-1.6" y="-32.5" width="3.2" height="6" fill="#6c6c6c" transform="rotate(180)"/><rect x="-1.6" y="-32.5" width="3.2" height="6" fill="#6c6c6c" transform="rotate(190)"/><rect x="-1.6" y="-32.5" width="3.2" height="6" fill="#6c6c6c" transform="rotate(200)"/><rect x="-1.6" y="-32.5" width="3.2" height="6" fill="#6c6c6c" transform="rotate(210)"/><rect x="-1.6" y="-32.5" width="3.2" height="6" fill="#6c6c6c" transform="rotate(220)"/><rect x="-1.6" y="-32.5" width="3.2" height="6" fill="#6c6c6c" transform="rotate(230)"/><rect x="-1.6" y="-32.5" width="3.2" height="6" fill="#6c6c6c" transform="rotate(240)"/><rect x="-1.6" y="-32.5" width="3.2" height="6" fill="#6c6c6c" transform="rotate(250)"/><rect x="-1.6" y="-32.5" width="3.2" height="6" fill="#6c6c6c" transform="rotate(260)"/><rect x="-1.6" y="-32.5" width="3.2" height="6" fill="#6c6c6c" transform="rotate(270)"/><rect x="-1.6" y="-32.5" width="3.2" height="6" fill="#6c6c6c" transform="rotate(280)"/><rect x="-1.6" y="-32.5" width="3.2" height="6" fill="#6c6c6c" transform="rotate(290)"/><rect x="-1.6" y="-32.5" width="3.2" height="6" fill="#6c6c6c" transform="rotate(300)"/><rect x="-1.6" y="-32.5" width="3.2" height="6" fill="#6c6c6c" transform="rotate(310)"/><rect x="-1.6" y="-32.5" width="3.2" height="6" fill="#6c6c6c" transform="rotate(320)"/><rect x="-1.6" y="-32.5" width="3.2" height="6" fill="#6c6c6c" transform="rotate(330)"/><rect x="-1.6" y="-32.5" width="3.2" height="6" fill="#6c6c6c" transform="rotate(340)"/><rect x="-1.6" y="-32.5" width="3.2" height="6" fill="#6c6c6c" transform="rotate(350)"/><path d="M0 -23 L9 -14 L4 -14 L4 -9 L-4 -9 L-4 -14 L-9 -14z" fill="#6a6a6a" transform="rotate(0)"/><path d="M0 -23 L9 -14 L4 -14 L4 -9 L-4 -9 L-4 -14 L-9 -14z" fill="#6a6a6a" transform="rotate(90)"/><path d="M0 -23 L9 -14 L4 -14 L4 -9 L-4 -9 L-4 -14 L-9 -14z" fill="#6a6a6a" transform="rotate(180)"/><path d="M0 -23 L9 -14 L4 -14 L4 -9 L-4 -9 L-4 -14 L-9 -14z" fill="#6a6a6a" transform="rotate(270)"/><circle r="3.5" fill="#6a6a6a"/></g><path d="M1 76.5h66" stroke="#6a6a6a" stroke-width="2"/><path d="M33.5 71v11" stroke="#6a6a6a" stroke-width="2"/></svg>
</div>
<div class="a" style="left:851px;top:298px;width:173px;height:158px;background:#fcfcfc;border:1px solid #a9a9a9;box-shadow:1px 1px 2px rgba(0,0,0,.35)"></div>
<div class="a" style="left:852px;top:299px;width:21px;height:156px;background:#f8f8f8;border-right:1px solid #f0f0f0"></div>
<div class="a" style="left:853px;top:362px;width:169px;height:16px;background:linear-gradient(#fee6b8,#f9c77e);border:1px solid #e5b46a;border-radius:2px"></div>
<div class="t" style="left:875.5px;top:303.9px;font-size:9px;color:#111;-webkit-text-stroke:.15px #111;transform:scaleX(.905)">Geometry from WKT</div>
<div class="t" style="left:875.5px;top:319.4px;font-size:9px;color:#a9a9a9;-webkit-text-stroke:.15px #a9a9a9;transform:scaleX(.905)">WKT from Geometry</div>
<div class="t" style="left:875.5px;top:334.8px;font-size:9px;color:#a9a9a9;-webkit-text-stroke:.15px #a9a9a9;transform:scaleX(.905)">Export Transect Pixels</div>
<div class="t" style="left:875.5px;top:350.3px;font-size:9px;color:#a9a9a9;-webkit-text-stroke:.15px #a9a9a9;transform:scaleX(.905)">Export Mask Pixels</div>
<div class="t" style="left:875.5px;top:365.7px;font-size:9px;color:#111;-webkit-text-stroke:.15px #111;transform:scaleX(.905)">Export View as Google Earth KMZ</div>
<div class="t" style="left:875.5px;top:381.2px;font-size:9px;color:#111;-webkit-text-stroke:.15px #111;transform:scaleX(.905)">Export View as Image</div>
<div class="t" style="left:875.5px;top:396.7px;font-size:9px;color:#111;-webkit-text-stroke:.15px #111;transform:scaleX(.905)">Export Colour Palette as File</div>
<div class="t" style="left:875.5px;top:412.1px;font-size:9px;color:#111;-webkit-text-stroke:.15px #111;transform:scaleX(.905)">Export Colour Legend as Image</div>
<div class="t" style="left:875.5px;top:427.6px;font-size:9px;color:#111;-webkit-text-stroke:.15px #111;transform:scaleX(.905)">Spatial Subset from View...</div>
<div class="t" style="left:875.5px;top:443.0px;font-size:9px;color:#111;-webkit-text-stroke:.15px #111;transform:scaleX(.905)">Copy Pixel-Info to Clipboard</div>
<svg class="a" style="left:1014px;top:370px" width="10" height="15"><path d="M1 1v11l2.6-2.4 1.8 4 1.6-.7-1.8-3.9h3.4z" fill="#fff" stroke="#555" stroke-width=".9"/></svg>

<div class="a" style="left:1425px;top:57px;width:15px;height:708px;background:#f0f0f0"></div>
<div class="a" style="left:1427px;top:66px;width:10px;height:9px;border-radius:3px;background:linear-gradient(135deg,#5ac0c8,#2a8aa0);opacity:.75"></div><div class="t" style="left:1436px;top:78px;font-size:8.4px;color:#333;transform:rotate(90deg) scaleX(.9)">Product Library</div>
<div class="a" style="left:1426px;top:140px;width:14px;height:1px;background:#c8c8c8"></div>
<div class="a" style="left:1427px;top:149px;width:10px;height:9px;border-radius:3px;background:linear-gradient(135deg,#8a8ad0,#3a3a8a);opacity:.75"></div><div class="t" style="left:1436px;top:161px;font-size:8.4px;color:#333;transform:rotate(90deg) scaleX(.9)">Layer Manager</div>
<div class="a" style="left:1426px;top:222px;width:14px;height:1px;background:#c8c8c8"></div>
<div class="a" style="left:1427px;top:233px;width:10px;height:9px;border-radius:3px;background:linear-gradient(135deg,#b0a0d8,#6a5aa0);opacity:.75"></div><div class="t" style="left:1436px;top:245px;font-size:8.4px;color:#333;transform:rotate(90deg) scaleX(.9)">Mask Manager</div>
<div class="a" style="left:0;top:765px;width:1440px;height:16px;background:#f0f0f0"></div>
<div class="ss" style="left:812px"></div>
<div class="ss" style="left:898px"></div>
<div class="ss" style="left:1040px"></div>
<div class="ss" style="left:1147px"></div>
<div class="ss" style="left:1310px"></div>
<div class="st" style="left:832px;transform:scaleX(.9);transform-origin:0 0">X</div>
<div class="st" style="left:847px;transform:scaleX(.9);transform-origin:0 0">-- Y</div>
<div class="st" style="left:872px;transform:scaleX(.9);transform-origin:0 0">--</div>
<div class="st" style="left:934px;transform:scaleX(.9);transform-origin:0 0">Lat</div>
<div class="st" style="left:960px;transform:scaleX(.9);transform-origin:0 0">-- Lon</div>
<div class="st" style="left:998px;transform:scaleX(.9);transform-origin:0 0">--</div>
<div class="st" style="left:1066px;transform:scaleX(.9);transform-origin:0 0">Zoom --  Level --</div>
<div class="st" style="left:1190px;transform:scaleX(.9);transform-origin:0 0">Pixel Spacing: -- m -- m</div>
</body></html>
